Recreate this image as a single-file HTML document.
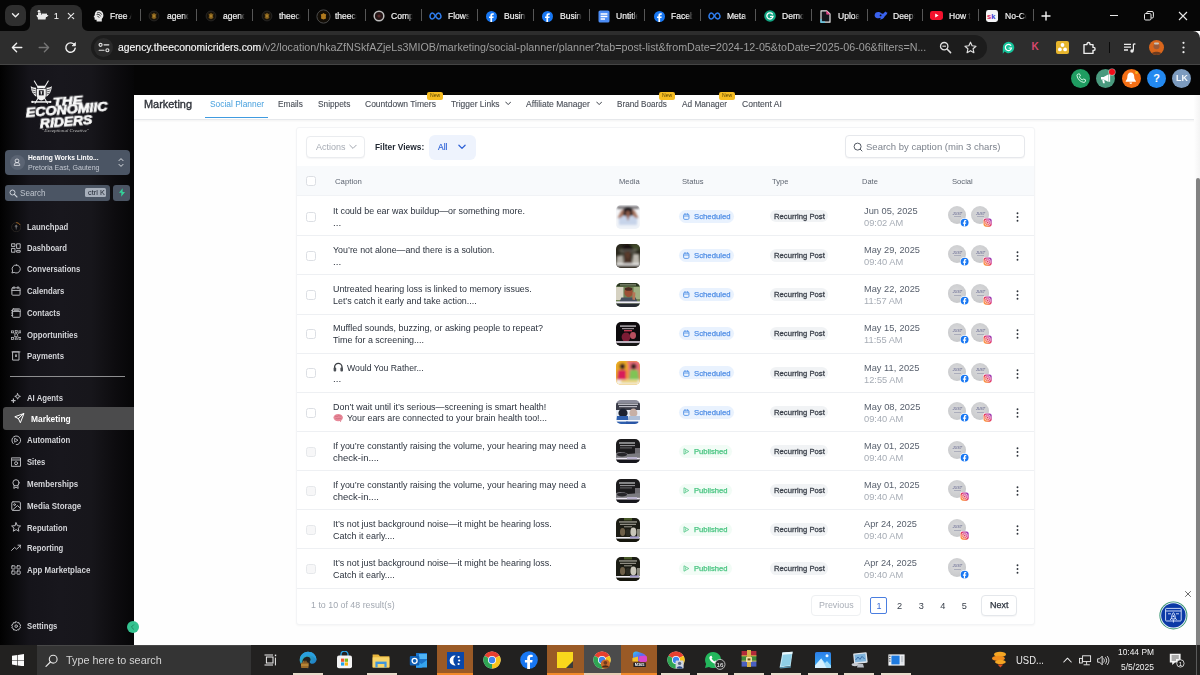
<!DOCTYPE html>
<html lang="en">
<head>
<meta charset="utf-8">
<title>Social Planner</title>
<style>
*{box-sizing:border-box;margin:0;padding:0}
html,body{width:1200px;height:675px;overflow:hidden;background:#fff;font-family:"Liberation Sans",sans-serif;}
.abs{position:absolute}
.t{white-space:nowrap}
#root{position:relative;width:1200px;height:675px;overflow:hidden;background:#fdfdfe}
/* chrome */
#tabbar{left:0;top:0;width:1200px;height:31px;background:#060606}
#toolbar{left:0;top:31px;width:1200px;height:33px;background:#2d2d2d;border-radius:0 7px 0 0}
#tbline{left:0;top:64px;width:1200px;height:1px;background:#454545}
.tab{top:7.6px;height:16px;color:#f4f4f4;font-size:9.4px;line-height:16px;white-space:nowrap;overflow:hidden;transform-origin:0 50%;transform:scaleX(.91);-webkit-mask-image:linear-gradient(90deg,#000 68%,transparent 92%);mask-image:linear-gradient(90deg,#000 68%,transparent 92%);-webkit-text-stroke:.2px #f4f4f4}
.tsep{top:9px;width:1px;height:11.6px;background:#565656}
#urlpill{left:91px;top:35px;width:896px;height:25px;border-radius:12.5px;background:#1c1c1c}
#url{left:117px;top:40px;font-size:10.5px;line-height:15px;color:#9d9d9d;white-space:nowrap}
#url b{font-weight:normal;color:#f6f6f6;-webkit-text-stroke:.15px #f6f6f6}
/* app */
#apphead{left:0;top:65px;width:1200px;height:30px;background:#050505}
#sidebar{left:0;top:65px;width:134px;height:580px;background:linear-gradient(90deg,#010101 0%,#060607 5%,#15141a 22%,#18171d 45%,#17161b 68%,#0d0c0f 86%,#060607 100%)}
#main{left:134px;top:95px;width:1066px;height:550px;background:#fefefe}
#navbar{left:134px;top:95px;width:1062px;height:25px;background:#fff;border-bottom:1px solid #e6e8eb;box-shadow:0 1px 2px rgba(0,0,0,.05)}
.newb{top:92px;height:7px;width:14px;background:#f7c325;border-radius:2px;color:#5c4500;font-size:5px;line-height:7px;text-align:center}
#card{left:296px;top:127px;width:739px;height:498px;background:#fff;border:1px solid #f3f4f6;border-radius:3px;box-shadow:0 1px 2px rgba(16,24,40,.035)}
#thead{left:297px;top:165.8px;width:737px;height:30.6px;background:#f8fafc;border-bottom:1px solid #f1f3f6}
.cb{width:10px;height:10px;border:1px solid #dcdfe4;border-radius:2.5px;background:#fff}
.rowline{left:297px;width:737px;height:1px;background:#eef0f3}
.thumb{left:616px;width:24px;height:24px;border-radius:4px;overflow:hidden}
.av{width:18px;height:18px;border-radius:50%;background:radial-gradient(circle at 45% 40%,#d9d9db 0%,#cdced0 55%,#bfc0c3 100%)}
/* taskbar */
#taskbar{left:0;top:645px;width:1200px;height:30px;background:#222120}
</style>
</head>
<body>
<div id="root">

<div id="tabbar" class="abs"></div>
<div id="toolbar" class="abs"></div>
<div id="tbline" class="abs"></div>
<div class="abs" style="left:5px;top:5px;width:21px;height:21px;border-radius:7px;background:#2f2f2f"></div>
<svg class="abs" style="left:11px;top:12px" width="9" height="7" viewBox="0 0 9 7"><path d="M1.5 1.8 L4.5 4.8 L7.5 1.8" fill="none" stroke="#f0f0f0" stroke-width="1.4" stroke-linecap="round" stroke-linejoin="round"/></svg>
<div class="abs" style="left:30px;top:5px;width:52px;height:27px;border-radius:8px 8px 0 0;background:#2d2d2d"></div>
<svg class="abs" style="left:24px;top:25px" width="6" height="6"><path d="M6 0 V6 H0 A6 6 0 0 0 6 0Z" fill="#2d2d2d"/></svg>
<svg class="abs" style="left:82px;top:25px" width="6" height="6"><path d="M0 0 V6 H6 A6 6 0 0 1 0 0Z" fill="#2d2d2d"/></svg>
<svg class="abs" style="left:36px;top:9px" width="13" height="12" viewBox="0 0 13 12"><g fill="#e9e9e9"><circle cx="3" cy="2.2" r="1.3"/><rect x="2" y="3.6" width="3" height="2.5"/><path d="M0.5 6 H12.5 L11 8 H10 L9.5 10.5 H2 L1.6 8 H1Z"/><rect x="5.5" y="4.6" width="5.5" height="1.6"/></g></svg>
<div class="abs tab" style="left:54px;width:8px;-webkit-mask-image:none;mask-image:none">1</div>
<svg class="abs" style="left:66.5px;top:12px" width="8" height="8" viewBox="0 0 8 8"><path d="M1.3 1.3 L6.7 6.7 M6.7 1.3 L1.3 6.7" stroke="#e6e6e6" stroke-width="1.2" stroke-linecap="round"/></svg>
<svg class="abs" style="left:92.7px;top:10px" width="11" height="12" viewBox="0 0 11 12"><path d="M5.6 0.6 C8.4 0.6 10.4 2.6 10.4 5.2 C10.4 7 9.5 8.2 8.8 9 V11.5 H3.6 V9.8 H2.4 C1.8 9.8 1.6 9.4 1.6 8.9 V7.6 L0.6 7.1 L1.7 5.2 C1.7 2.6 3.2 0.6 5.6 0.6Z" fill="#e8e8e8"/><path d="M4 3 C5.5 2 8 2.6 8.6 4.6 M3.6 4.6 C5 4 7.2 4.6 7.6 6.4 M4.4 6.3 C5.2 6.2 6 6.8 6.2 7.8" stroke="#111" stroke-width=".8" fill="none"/></svg>
<div class="abs tab" style="left:110.4px;width:26px">Free A</div>
<div class="abs tsep" style="left:139.7px"></div>
<svg class="abs" style="left:148.4px;top:9.5px" width="12" height="12" viewBox="0 0 12 12"><circle cx="6" cy="6" r="4.9" fill="#15110a" stroke="#2c2c2c" stroke-width=".8"/><path d="M6 2.8 L7.3 3.9 L8.5 3.6 L8 5.9 L8.4 7.9 L6 9.2 L3.6 7.9 L4 5.9 L3.5 3.6 L4.7 3.9Z" fill="#7d5a1c"/><path d="M6 4 L7 6 L6 8 L5 6Z" fill="#b58a2e"/></svg>
<div class="abs tab" style="left:166.6px;width:26px">agency</div>
<div class="abs tsep" style="left:195.9px"></div>
<svg class="abs" style="left:204.6px;top:9.5px" width="12" height="12" viewBox="0 0 12 12"><circle cx="6" cy="6" r="4.9" fill="#15110a" stroke="#2c2c2c" stroke-width=".8"/><path d="M6 2.8 L7.3 3.9 L8.5 3.6 L8 5.9 L8.4 7.9 L6 9.2 L3.6 7.9 L4 5.9 L3.5 3.6 L4.7 3.9Z" fill="#7d5a1c"/><path d="M6 4 L7 6 L6 8 L5 6Z" fill="#b58a2e"/></svg>
<div class="abs tab" style="left:222.8px;width:26px">agency</div>
<div class="abs tsep" style="left:252.1px"></div>
<svg class="abs" style="left:260.8px;top:9.5px" width="12" height="12" viewBox="0 0 12 12"><circle cx="6" cy="6" r="4.9" fill="#15110a" stroke="#2c2c2c" stroke-width=".8"/><path d="M6 2.8 L7.3 3.9 L8.5 3.6 L8 5.9 L8.4 7.9 L6 9.2 L3.6 7.9 L4 5.9 L3.5 3.6 L4.7 3.9Z" fill="#7d5a1c"/><path d="M6 4 L7 6 L6 8 L5 6Z" fill="#b58a2e"/></svg>
<div class="abs tab" style="left:279.0px;width:26px">theeconomic</div>
<div class="abs tsep" style="left:308.3px"></div>
<svg class="abs" style="left:315.5px;top:8.5px" width="15" height="15" viewBox="0 0 15 15"><circle cx="7.5" cy="7.5" r="6.6" fill="#120d06" stroke="#4a4a4a" stroke-width="1"/><path d="M7.5 4 L9.2 5.2 L10.2 5 L9.8 7.6 L10 9.4 L7.5 10.6 L5 9.4 L5.2 7.6 L4.8 5 L5.8 5.2Z" fill="#b07a1e"/></svg>
<div class="abs tab" style="left:335.2px;width:26px">theeconomic</div>
<div class="abs tsep" style="left:364.5px"></div>
<svg class="abs" style="left:373.2px;top:10px" width="12" height="12" viewBox="0 0 12 12"><circle cx="6" cy="6" r="4.8" fill="#241616" stroke="#bdbdbd" stroke-width="1.5"/><circle cx="6" cy="6" r="1.6" fill="#5a2a2a"/></svg>
<div class="abs tab" style="left:391.4px;width:26px">Company</div>
<div class="abs tsep" style="left:420.7px"></div>
<svg class="abs" style="left:428.9px;top:12px" width="13" height="8" viewBox="0 0 13 8"><path d="M1.2 5.6 C0.6 3.4 1.8 1 3.3 1 C4.9 1 5.9 3.2 6.5 4.2 C7.2 5.4 8.3 7 9.7 7 C11.3 7 12.3 5.4 11.8 3.4 C11.4 1.8 10.4 1 9.5 1 C8.2 1 7.2 2.6 6.5 3.8 C5.7 5.2 4.6 7 3.2 7 C2.1 7 1.5 6.4 1.2 5.6Z" fill="none" stroke="#2f7ef0" stroke-width="1.5"/></svg>
<div class="abs tab" style="left:447.6px;width:26px">Flows</div>
<div class="abs tsep" style="left:476.9px"></div>
<svg class="abs" style="left:486.1px;top:10.5px" width="11" height="11" viewBox="0 0 11 11"><circle cx="5.5" cy="5.5" r="5.5" fill="#1877f2"/><path d="M6.1 11 V7.1 H7.5 L7.75 5.5 H6.1 V4.5 C6.1 3.95 6.35 3.7 6.95 3.7 H7.8 V2.3 C7.5 2.25 7 2.2 6.5 2.2 C5.2 2.2 4.4 3 4.4 4.3 V5.5 H3 V7.1 H4.4 V11Z" fill="#fff"/></svg>
<div class="abs tab" style="left:503.8px;width:26px">Business</div>
<div class="abs tsep" style="left:533.1px"></div>
<svg class="abs" style="left:542.3px;top:10.5px" width="11" height="11" viewBox="0 0 11 11"><circle cx="5.5" cy="5.5" r="5.5" fill="#1877f2"/><path d="M6.1 11 V7.1 H7.5 L7.75 5.5 H6.1 V4.5 C6.1 3.95 6.35 3.7 6.95 3.7 H7.8 V2.3 C7.5 2.25 7 2.2 6.5 2.2 C5.2 2.2 4.4 3 4.4 4.3 V5.5 H3 V7.1 H4.4 V11Z" fill="#fff"/></svg>
<div class="abs tab" style="left:560.0px;width:26px">Business</div>
<div class="abs tsep" style="left:588.8px"></div>
<svg class="abs" style="left:597.5px;top:9.5px" width="12" height="13" viewBox="0 0 12 13"><rect x="0.5" y="0.5" width="11" height="12" rx="1.6" fill="#4c8df6"/><path d="M2.6 4 H9.4 M2.6 6.5 H9.4 M2.6 9 H7" stroke="#fff" stroke-width="1.3"/></svg>
<div class="abs tab" style="left:615.6px;width:26px">Untitled</div>
<div class="abs tsep" style="left:644.3px"></div>
<svg class="abs" style="left:653.5px;top:10.5px" width="11" height="11" viewBox="0 0 11 11"><circle cx="5.5" cy="5.5" r="5.5" fill="#1877f2"/><path d="M6.1 11 V7.1 H7.5 L7.75 5.5 H6.1 V4.5 C6.1 3.95 6.35 3.7 6.95 3.7 H7.8 V2.3 C7.5 2.25 7 2.2 6.5 2.2 C5.2 2.2 4.4 3 4.4 4.3 V5.5 H3 V7.1 H4.4 V11Z" fill="#fff"/></svg>
<div class="abs tab" style="left:671.2px;width:26px">Facebook</div>
<div class="abs tsep" style="left:699.9px"></div>
<svg class="abs" style="left:708.1px;top:12px" width="13" height="8" viewBox="0 0 13 8"><path d="M1.2 5.6 C0.6 3.4 1.8 1 3.3 1 C4.9 1 5.9 3.2 6.5 4.2 C7.2 5.4 8.3 7 9.7 7 C11.3 7 12.3 5.4 11.8 3.4 C11.4 1.8 10.4 1 9.5 1 C8.2 1 7.2 2.6 6.5 3.8 C5.7 5.2 4.6 7 3.2 7 C2.1 7 1.5 6.4 1.2 5.6Z" fill="none" stroke="#2f7ef0" stroke-width="1.5"/></svg>
<div class="abs tab" style="left:726.8px;width:26px">Meta B</div>
<div class="abs tsep" style="left:755.4px"></div>
<svg class="abs" style="left:764.1px;top:10px" width="12" height="12" viewBox="0 0 12 12"><circle cx="6" cy="6" r="5.8" fill="#11a683"/><path d="M8.4 4 A3.1 3.1 0 1 0 9 6.4 H6.6" fill="none" stroke="#fff" stroke-width="1.3" stroke-linecap="round"/></svg>
<div class="abs tab" style="left:782.3px;width:26px">Demo</div>
<div class="abs tsep" style="left:811.0px"></div>
<svg class="abs" style="left:820.2px;top:9.5px" width="11" height="13" viewBox="0 0 11 13"><path d="M1 0.8 H6.8 L10 4 V12.2 H1Z" fill="#16161c" stroke="#e6e6e6" stroke-width="1.2" stroke-linejoin="round"/><path d="M6.6 0.8 V4.2 H10" fill="#e64a8a" stroke="#e64a8a" stroke-width=".6"/><path d="M1 9 V12.2 H5" stroke="#54c7e8" stroke-width="1.2" fill="none"/></svg>
<div class="abs tab" style="left:837.9px;width:26px">Upload</div>
<div class="abs tsep" style="left:866.5px"></div>
<svg class="abs" style="left:874.2px;top:11px" width="14" height="10" viewBox="0 0 14 10"><path d="M0.6 4.4 C0.6 1.8 2.6 0.8 4.6 1 C6.6 1.2 7.6 2.6 8.6 2.8 C9.8 3 10.6 1.2 11.4 0.6 C11.8 1.4 12.8 1.6 13.4 1.4 C13.2 3.4 11.8 4.2 10.8 5.2 C9.8 7.6 7.6 8.6 5.6 8.4 C6.4 8 6.8 7.4 6.8 6.8 C5.4 7.6 0.6 7.6 0.6 4.4Z" fill="#3a62ee"/><circle cx="6.6" cy="4.4" r="0.9" fill="#0b0b0b"/></svg>
<div class="abs tab" style="left:893.4px;width:26px">DeepSeek</div>
<div class="abs tsep" style="left:922.0px"></div>
<svg class="abs" style="left:930.2px;top:11px" width="13" height="9" viewBox="0 0 13 9"><rect width="13" height="9" rx="2.4" fill="#f4112d"/><path d="M5.2 2.4 L8.6 4.5 L5.2 6.6Z" fill="#fff"/></svg>
<div class="abs tab" style="left:948.9px;width:26px">How t</div>
<div class="abs tsep" style="left:977.6px"></div>
<svg class="abs" style="left:986.3px;top:9.5px" width="12" height="12" viewBox="0 0 12 12"><rect width="12" height="12" rx="2.4" fill="#f4f4f6"/><text x="1" y="9" font-family="Liberation Sans,sans-serif" font-weight="bold" font-size="7.5" fill="#e0245e" letter-spacing="-.4">s</text><text x="5.2" y="9" font-family="Liberation Sans,sans-serif" font-weight="bold" font-size="7.5" fill="#3a3ad0">k</text></svg>
<div class="abs tab" style="left:1004.5px;width:26px">No-Code</div>
<div class="abs tsep" style="left:1033.2px"></div>
<svg class="abs" style="left:1041px;top:10.5px" width="10" height="10" viewBox="0 0 10 10"><path d="M5 1 V9 M1 5 H9" stroke="#f2f2f2" stroke-width="1.4" stroke-linecap="round"/></svg>
<div class="abs" style="left:1110px;top:15px;width:8px;height:1px;background:#e8e8e8"></div>
<svg class="abs" style="left:1143.5px;top:10.5px" width="10" height="10" viewBox="0 0 10 10"><rect x="0.5" y="2.5" width="6.5" height="6.5" rx="1.2" fill="none" stroke="#e8e8e8" stroke-width="1"/><path d="M2.8 2.4 V1.7 A1.2 1.2 0 0 1 4 0.5 H8 A1.4 1.4 0 0 1 9.4 1.9 V5.8 A1.2 1.2 0 0 1 8.2 7 H7.2" fill="none" stroke="#e8e8e8" stroke-width="1"/></svg>
<svg class="abs" style="left:1178px;top:10.5px" width="10" height="10" viewBox="0 0 10 10"><path d="M1 1 L9 9 M9 1 L1 9" stroke="#e8e8e8" stroke-width="1.1"/></svg>
<svg class="abs" style="left:11px;top:42px" width="12" height="11" viewBox="0 0 12 11"><path d="M10.8 5.5 H1.6 M5.6 1.3 L1.4 5.5 L5.6 9.7" fill="none" stroke="#efefef" stroke-width="1.35" stroke-linecap="round" stroke-linejoin="round"/></svg>
<svg class="abs" style="left:38px;top:42px" width="12" height="11" viewBox="0 0 12 11"><path d="M1.2 5.5 H10.4 M6.4 1.3 L10.6 5.5 L6.4 9.7" fill="none" stroke="#757575" stroke-width="1.35" stroke-linecap="round" stroke-linejoin="round"/></svg>
<svg class="abs" style="left:64px;top:41px" width="13" height="13" viewBox="0 0 13 13"><path d="M10.6 4.2 A4.7 4.7 0 1 0 11.2 7.2" fill="none" stroke="#efefef" stroke-width="1.4" stroke-linecap="round"/><path d="M11.4 1.6 V4.8 H8.2Z" fill="#efefef" stroke="#efefef" stroke-width=".8" stroke-linejoin="round"/></svg>
<div id="urlpill" class="abs"></div>
<div class="abs" style="left:94px;top:38px;width:19px;height:19px;border-radius:50%;background:#2a2a2a"></div>
<svg class="abs" style="left:97.5px;top:42px" width="12" height="11" viewBox="0 0 12 11"><g fill="none" stroke="#e4e4e4" stroke-width="1.15" stroke-linecap="round"><circle cx="2.6" cy="2.8" r="1.5"/><path d="M6 2.8 H10.8"/><circle cx="9.4" cy="8.2" r="1.5"/><path d="M1.2 8.2 H6"/></g></svg>
<div class="abs t" style="left:117.5px;top:40.30px;font-size:10.6px;line-height:15px;color:#f6f6f6;transform-origin:0 50%;transform: scaleX(0.9826);-webkit-text-stroke:.15px #f6f6f6;">agency.theeconomicriders.com</div>
<div class="abs t" style="left:262px;top:40.30px;font-size:10.6px;line-height:15px;color:#9e9e9e;transform-origin:0 50%;transform: scaleX(1.0118);">/v2/location/hkaZfNSkfAZjeLs3MIOB/marketing/social-planner/planner?tab=post-list&amp;fromDate=2024-12-05&amp;toDate=2025-06-06&amp;filters=N...</div>
<svg class="abs" style="left:939px;top:41px" width="13" height="13" viewBox="0 0 13 13"><circle cx="5.2" cy="5.2" r="3.7" fill="none" stroke="#e0e0e0" stroke-width="1.3"/><path d="M8 8 L11.6 11.6" stroke="#e0e0e0" stroke-width="1.5" stroke-linecap="round"/><path d="M3.4 5.2 H7" stroke="#e0e0e0" stroke-width="1.1"/></svg>
<svg class="abs" style="left:963.5px;top:40.5px" width="13" height="13" viewBox="0 0 13 13"><path d="M6.5 1.2 L8.1 4.8 L12 5.2 L9.1 7.8 L9.9 11.7 L6.5 9.7 L3.1 11.7 L3.9 7.8 L1 5.2 L4.9 4.8Z" fill="none" stroke="#e0e0e0" stroke-width="1.15" stroke-linejoin="round"/></svg>
<svg class="abs" style="left:1001.5px;top:40.5px" width="13" height="14" viewBox="0 0 13 14"><path d="M6.5 0.8 A5.7 5.7 0 1 1 2.6 10.6 L0.8 12.8 V6.5 A5.7 5.7 0 0 1 6.5 0.8Z" fill="#15c39a"/><path d="M8.8 4.4 A3.1 3.1 0 1 0 9.5 7 H7" fill="none" stroke="#fff" stroke-width="1.2" stroke-linecap="round"/></svg>
<div class="abs" style="left:1030px;top:40px;width:10px;height:14px;font-size:10px;line-height:14px;font-weight:bold;color:#d8476d;text-align:center">K</div>
<svg class="abs" style="left:1055.5px;top:41px" width="13" height="13" viewBox="0 0 13 13"><rect width="13" height="13" rx="2" fill="#e7b52c"/><circle cx="6.5" cy="4" r="1.9" fill="#fff"/><circle cx="3.9" cy="8.4" r="1.9" fill="#fff"/><circle cx="9.1" cy="8.4" r="1.9" fill="#fff"/></svg>
<svg class="abs" style="left:1082px;top:40.5px" width="14" height="14" viewBox="0 0 14 14"><path d="M2 3.6 H5 V3 A1.5 1.5 0 0 1 8 3 V3.6 H11 V6.4 H11.6 A1.5 1.5 0 0 1 11.6 9.4 H11 V12.4 H2Z" fill="none" stroke="#ededed" stroke-width="1.4" stroke-linejoin="round"/></svg>
<div class="abs" style="left:1109px;top:42px;width:1px;height:11px;background:#0a0a0a"></div>
<svg class="abs" style="left:1123px;top:41.5px" width="13" height="12" viewBox="0 0 13 12"><path d="M1 2.4 H8 M1 5.2 H8 M1 8 H5" stroke="#ededed" stroke-width="1.3"/><path d="M10.4 2 V8.6" stroke="#ededed" stroke-width="1.2"/><path d="M10.4 2 H12.4" stroke="#ededed" stroke-width="1.4"/><circle cx="9" cy="9" r="1.7" fill="#ededed"/></svg>
<svg class="abs" style="left:1148.5px;top:40px" width="15" height="15" viewBox="0 0 15 15"><defs><clipPath id="avc"><circle cx="7.5" cy="7.5" r="7.5"/></clipPath></defs><g clip-path="url(#avc)"><rect width="15" height="15" fill="#d9661c"/><circle cx="7.5" cy="6.2" r="3" fill="#9a5a3a"/><path d="M2 15 C2 10.5 13 10.5 13 15Z" fill="#6d3b1f"/><rect x="5" y="2.4" width="5" height="2" rx="1" fill="#c9c2b8"/></g></svg>
<svg class="abs" style="left:1181.5px;top:41px" width="3" height="13" viewBox="0 0 3 13"><circle cx="1.5" cy="1.8" r="1.1" fill="#ededed"/><circle cx="1.5" cy="6.5" r="1.1" fill="#ededed"/><circle cx="1.5" cy="11.2" r="1.1" fill="#ededed"/></svg>
<div id="apphead" class="abs"></div>
<div id="sidebar" class="abs"></div>
<svg class="abs" style="left:30.4px;top:80.2px" width="22.6" height="25.6" viewBox="0 0 24 27"><g stroke="#f2f2f2" stroke-width="1.1" stroke-linecap="round"><path d="M4.6 1 L18.6 24.6"/><path d="M19.4 1 L5.4 24.6"/></g><g fill="#f2f2f2"><path d="M7.8 6 H16.2 V8.4 H7.8Z"/><path d="M7.2 9 H16.8 V16.6 C16.8 19.4 14.4 21 12 21.8 C9.6 21 7.2 19.4 7.2 16.6Z"/><path d="M6.4 8 C4 8.2 2 7.2 0.8 6.2 C1 9.4 1.8 12.4 3.4 14.6 C4.4 16 5.6 17 6.6 17.6Z"/><path d="M17.6 8 C20 8.2 22 7.2 23.2 6.2 C23 9.4 22.2 12.4 20.6 14.6 C19.6 16 18.4 17 17.4 17.6Z"/><path d="M2.2 22.4 H21.8 V24 H2.2Z"/><circle cx="2.4" cy="23.2" r="1.2"/><circle cx="21.6" cy="23.2" r="1.2"/></g><g stroke="#18171c" stroke-width=".7" fill="none"><path d="M1.6 9.2 L6.2 10.4 M2.4 11.6 L6.2 12.6 M3.4 13.8 L6.4 14.8"/><path d="M22.4 9.2 L17.8 10.4 M21.6 11.6 L17.8 12.6 M20.6 13.8 L17.6 14.8"/><path d="M7.2 9 H16.8" stroke-width=".6"/></g><rect x="9.4" y="10.8" width="5.2" height="5.4" fill="#18171c"/><path d="M11 11.8 H13 V13 H12.6 V15.2 H11.4 V13 H11Z" fill="#f2f2f2"/></svg>
<div class="abs t" style="left:52.6px;top:95.70px;font-size:11.8px;line-height:13px;color:#fafafa;font-weight:bold;font-style:italic;transform-origin:0 50%;transform:rotate(-4.5deg) scaleX(1.2495);-webkit-text-stroke:.75px #fafafa;will-change:transform;">THE</div>
<div class="abs t" style="left:26.4px;top:106.40px;font-size:12.6px;line-height:15px;color:#fafafa;font-weight:bold;font-style:italic;transform-origin:0 50%;transform:rotate(-4.5deg) scaleX(1.1242);-webkit-text-stroke:.75px #fafafa;will-change:transform;">ECONOMIIC</div>
<div class="abs t" style="left:39.8px;top:116.60px;font-size:12.4px;line-height:14px;color:#fafafa;font-weight:bold;font-style:italic;transform-origin:0 50%;transform:rotate(-4.5deg) scaleX(1.1190);-webkit-text-stroke:.75px #fafafa;will-change:transform;">RIDERS</div>
<div class="abs t" style="left:42px;top:127.60px;font-size:4.6px;line-height:6px;color:#bdbdbd;font-style:italic;font-family:&quot;Liberation Serif&quot;,serif;transform-origin:0 50%;transform: scaleX(1.1034);">&quot;Exceptional Creative&quot;</div>
<div class="abs" style="left:5px;top:150px;width:125px;height:25px;border-radius:4px;background:#4b5564"></div>
<div class="abs" style="left:9.8px;top:154.6px;width:15.2px;height:15.2px;border-radius:50%;background:#5b6473"></div>
<svg class="abs" style="left:13.4px;top:158.2px" width="8" height="8" viewBox="0 0 8 8"><g fill="none" stroke="#e8eaee" stroke-width=".8"><circle cx="4" cy="2.9" r="1.9"/><path d="M1.2 7.4 C1.2 5.2 2.4 4.6 4 4.6 C5.6 4.6 6.8 5.2 6.8 7.4 Z" stroke-linejoin="round"/></g></svg>
<div class="abs t" style="left:28px;top:152.60px;font-size:7.8px;line-height:10px;color:#ffffff;font-weight:bold;transform-origin:0 50%;transform: scaleX(0.8534);">Hearing Works Linto...</div>
<div class="abs t" style="left:28px;top:162.80px;font-size:7.8px;line-height:10px;color:#c3c8d1;transform-origin:0 50%;transform: scaleX(0.9013);">Pretoria East, Gauteng</div>
<svg class="abs" style="left:118.3px;top:156.6px" width="6" height="11" viewBox="0 0 6 11"><path d="M1 3.6 L3 1.6 L5 3.6 M1 7.4 L3 9.4 L5 7.4" fill="none" stroke="#e3e6ea" stroke-width=".95" stroke-linecap="round" stroke-linejoin="round"/></svg>
<div class="abs" style="left:5px;top:184.6px;width:104.6px;height:16.2px;border-radius:3px;background:#4b5564"></div>
<svg class="abs" style="left:8.8px;top:188.6px" width="9" height="9" viewBox="0 0 9 9"><circle cx="3.5" cy="3.5" r="2.5" fill="none" stroke="#cdd2d9" stroke-width="1"/><path d="M5.4 5.4 L8 8" stroke="#cdd2d9" stroke-width="1.1" stroke-linecap="round"/></svg>
<div class="abs t" style="left:20px;top:186.80px;font-size:9.3px;line-height:12px;color:#bfc5ce;transform-origin:0 50%;transform: scaleX(0.8687);">Search</div>
<div class="abs" style="left:85px;top:188px;width:21.4px;height:9.4px;border-radius:1.5px;background:#a7afbb"></div>
<div class="abs t" style="left:87.6px;top:188.20px;font-size:7.3px;line-height:9px;color:#1d2430;transform-origin:0 50%;transform: scaleX(1.0105);">ctrl K</div>
<div class="abs" style="left:112.6px;top:184.6px;width:17.4px;height:16.2px;border-radius:3px;background:#4b5564"></div>
<svg class="abs" style="left:117.6px;top:188.4px" width="8" height="9" viewBox="0 0 8 9"><path d="M4.6 0.2 L1 4.8 H3.4 L3.2 8.8 L7 3.9 H4.6Z" fill="#34d399"/></svg>
<svg class="abs" style="left:10.7px;top:221.5px" width="10.4" height="10.4" viewBox="0 0 10.4 10.4"><circle cx="5.2" cy="5.2" r="4.6" fill="none" stroke="#2e2926" stroke-width=".8"/><path d="M5.2 0.6 A4.6 4.6 0 0 1 9.2 3" fill="none" stroke="#a8681f" stroke-width=".9"/><path d="M5.2 2.6 L7 4.6 H6 V5.6 H4.4 V4.6 H3.4Z M4.8 5.6 V7.4 H5.6 V5.6" fill="#b9babe" opacity=".55"/></svg>
<div class="abs t" style="left:26.7px;top:221.70px;font-size:8.6px;line-height:11px;color:#d3d4d8;font-weight:bold;transform-origin:0 50%;transform: scaleX(0.9009);">Launchpad</div>
<svg class="abs" style="left:10.7px;top:242.8px" width="10.4" height="10.4" viewBox="0 0 10.4 10.4"><g fill="none" stroke="#b9babe" stroke-width="1" stroke-linecap="round" stroke-linejoin="round"><rect x="0.8" y="0.8" width="3.2" height="2.6"/><rect x="6" y="0.8" width="3.2" height="4.6"/><rect x="0.8" y="5.4" width="3.2" height="3.8"/><rect x="6" y="7.4" width="3.2" height="1.8"/></g></svg>
<div class="abs t" style="left:26.7px;top:243.00px;font-size:8.6px;line-height:11px;color:#d3d4d8;font-weight:bold;transform-origin:0 50%;transform: scaleX(0.8911);">Dashboard</div>
<svg class="abs" style="left:10.7px;top:264.2px" width="10.4" height="10.4" viewBox="0 0 10.4 10.4"><g fill="none" stroke="#b9babe" stroke-width="1" stroke-linecap="round" stroke-linejoin="round"><path d="M5.4 1 A4 4 0 1 1 3.2 8.4 L0.9 9 L1.6 6.9 A4 4 0 0 1 5.4 1Z"/></g></svg>
<div class="abs t" style="left:26.7px;top:264.40px;font-size:8.6px;line-height:11px;color:#d3d4d8;font-weight:bold;transform-origin:0 50%;transform: scaleX(0.8928);">Conversations</div>
<svg class="abs" style="left:10.7px;top:285.8px" width="10.4" height="10.4" viewBox="0 0 10.4 10.4"><g fill="none" stroke="#b9babe" stroke-width="1" stroke-linecap="round" stroke-linejoin="round"><rect x="0.9" y="1.8" width="8.2" height="7.4" rx=".8"/><path d="M0.9 4.4 H9.1 M3 0.6 V2.6 M7 0.6 V2.6"/></g></svg>
<div class="abs t" style="left:26.7px;top:286.00px;font-size:8.6px;line-height:11px;color:#d3d4d8;font-weight:bold;transform-origin:0 50%;transform: scaleX(0.8974);">Calendars</div>
<svg class="abs" style="left:10.7px;top:307.8px" width="10.4" height="10.4" viewBox="0 0 10.4 10.4"><g fill="none" stroke="#b9babe" stroke-width="1" stroke-linecap="round" stroke-linejoin="round"><rect x="1.4" y="0.9" width="7.8" height="8.4" rx=".9"/><path d="M1.4 3.4 H9.2 M0.6 2.6 H1.8 M0.6 5 H1.8 M0.6 7.4 H1.8"/><path d="M3.4 2.2 H7.4" stroke-width="1.2"/></g></svg>
<div class="abs t" style="left:26.7px;top:308.00px;font-size:8.6px;line-height:11px;color:#d3d4d8;font-weight:bold;transform-origin:0 50%;transform: scaleX(0.9054);">Contacts</div>
<svg class="abs" style="left:10.7px;top:329.5px" width="10.4" height="10.4" viewBox="0 0 10.4 10.4"><g fill="none" stroke="#b9babe" stroke-width=".8"><rect x="0.5" y="0.9" width="1.9" height="1.9"/><rect x="8" y="0.9" width="1.9" height="1.9"/><rect x="0.5" y="7.6" width="1.9" height="1.9"/><rect x="8" y="7.6" width="1.9" height="1.9"/><rect x="4.2" y="0.3" width="2" height="2"/><rect x="4.2" y="8" width="2" height="2"/><circle cx="5.2" cy="5.2" r="1.5"/><path d="M2.4 2.8 L4 4.2 M8 2.8 L6.4 4.2 M2.4 7.6 L4 6.2 M8 7.6 L6.4 6.2 M5.2 2.3 V3.7 M5.2 6.7 V8"/></g></svg>
<div class="abs t" style="left:26.7px;top:329.70px;font-size:8.6px;line-height:11px;color:#d3d4d8;font-weight:bold;transform-origin:0 50%;transform: scaleX(0.8998);">Opportunities</div>
<svg class="abs" style="left:10.7px;top:351.2px" width="10.4" height="10.4" viewBox="0 0 10.4 10.4"><g fill="none" stroke="#b9babe" stroke-width="1" stroke-linecap="round" stroke-linejoin="round"><path d="M1 0.9 H9"/><rect x="2" y="0.9" width="6" height="8.2"/></g><rect x="4.2" y="3.4" width="1.6" height="2.6" fill="#b9babe"/></svg>
<div class="abs t" style="left:26.7px;top:351.40px;font-size:8.6px;line-height:11px;color:#d3d4d8;font-weight:bold;transform-origin:0 50%;transform: scaleX(0.9111);">Payments</div>
<svg class="abs" style="left:10.7px;top:392.8px" width="10.4" height="10.4" viewBox="0 0 10.4 10.4"><g fill="none" stroke="#b9babe" stroke-width="1" stroke-linecap="round" stroke-linejoin="round"><path d="M6.6 0.6 L7.4 2.6 L9.4 3.4 L7.4 4.2 L6.6 6.2 L5.8 4.2 L3.8 3.4 L5.8 2.6Z"/><path d="M2.4 5.8 V9.4 M0.6 7.6 H4.2" stroke-width="1.2"/></g></svg>
<div class="abs t" style="left:26.7px;top:393.00px;font-size:8.6px;line-height:11px;color:#d3d4d8;font-weight:bold;transform-origin:0 50%;transform: scaleX(0.9046);">AI Agents</div>
<svg class="abs" style="left:10.7px;top:434.8px" width="10.4" height="10.4" viewBox="0 0 10.4 10.4"><g fill="none" stroke="#b9babe" stroke-width="1" stroke-linecap="round" stroke-linejoin="round"><path d="M2.2 8.6 A4.4 4.4 0 1 1 5.2 9.8" /><path d="M4 3.4 L7 5.2 L4 7Z" stroke-width=".9"/></g></svg>
<div class="abs t" style="left:26.7px;top:435.00px;font-size:8.6px;line-height:11px;color:#d3d4d8;font-weight:bold;transform-origin:0 50%;transform: scaleX(0.9068);">Automation</div>
<svg class="abs" style="left:10.7px;top:456.8px" width="10.4" height="10.4" viewBox="0 0 10.4 10.4"><g fill="none" stroke="#b9babe" stroke-width="1" stroke-linecap="round" stroke-linejoin="round"><rect x="0.7" y="0.9" width="8.8" height="8.4"/><path d="M0.7 3 H9.5"/><circle cx="5.1" cy="6.2" r="1.5"/></g></svg>
<div class="abs t" style="left:26.7px;top:457.00px;font-size:8.6px;line-height:11px;color:#d3d4d8;font-weight:bold;transform-origin:0 50%;transform: scaleX(0.8906);">Sites</div>
<svg class="abs" style="left:10.7px;top:478.5px" width="10.4" height="10.4" viewBox="0 0 10.4 10.4"><g fill="none" stroke="#b9babe" stroke-width="1" stroke-linecap="round" stroke-linejoin="round"><circle cx="5" cy="3.8" r="3.1"/><path d="M3.2 6.4 L2.8 9.4 L5 8.2 L7.2 9.4 L6.8 6.4"/></g></svg>
<div class="abs t" style="left:26.7px;top:478.70px;font-size:8.6px;line-height:11px;color:#d3d4d8;font-weight:bold;transform-origin:0 50%;transform: scaleX(0.9259);">Memberships</div>
<svg class="abs" style="left:10.7px;top:500.5px" width="10.4" height="10.4" viewBox="0 0 10.4 10.4"><g fill="none" stroke="#b9babe" stroke-width="1" stroke-linecap="round" stroke-linejoin="round"><rect x="0.8" y="0.8" width="8.6" height="8.6" rx="1.2"/><circle cx="3.6" cy="3.6" r=".9"/><path d="M1.6 9 L6.4 4.6 L9.4 7.2"/></g></svg>
<div class="abs t" style="left:26.7px;top:500.70px;font-size:8.6px;line-height:11px;color:#d3d4d8;font-weight:bold;transform-origin:0 50%;transform: scaleX(0.9243);">Media Storage</div>
<svg class="abs" style="left:10.7px;top:522.4px" width="10.4" height="10.4" viewBox="0 0 10.4 10.4"><g fill="none" stroke="#b9babe" stroke-width="1" stroke-linecap="round" stroke-linejoin="round"><path d="M5.1 0.8 L6.4 3.7 L9.6 4 L7.2 6.1 L7.9 9.2 L5.1 7.6 L2.3 9.2 L3 6.1 L0.6 4 L3.8 3.7Z"/></g></svg>
<div class="abs t" style="left:26.7px;top:522.60px;font-size:8.6px;line-height:11px;color:#d3d4d8;font-weight:bold;transform-origin:0 50%;transform: scaleX(0.9003);">Reputation</div>
<svg class="abs" style="left:10.7px;top:543.2px" width="10.4" height="10.4" viewBox="0 0 10.4 10.4"><g fill="none" stroke="#b9babe" stroke-width="1" stroke-linecap="round" stroke-linejoin="round"><path d="M0.6 7.4 L3.6 4.4 L5.6 6.2 L9.6 2.4 M7 2.2 H9.8 V5"/></g></svg>
<div class="abs t" style="left:26.7px;top:543.40px;font-size:8.6px;line-height:11px;color:#d3d4d8;font-weight:bold;transform-origin:0 50%;transform: scaleX(0.8946);">Reporting</div>
<svg class="abs" style="left:10.7px;top:564.8px" width="10.4" height="10.4" viewBox="0 0 10.4 10.4"><g fill="none" stroke="#b9babe" stroke-width="1" stroke-linecap="round" stroke-linejoin="round"><rect x="0.8" y="0.8" width="3.2" height="3.2" rx=".4"/><rect x="6" y="0.8" width="3.2" height="3.2" rx=".4"/><rect x="0.8" y="6" width="3.2" height="3.2" rx=".4"/><rect x="6" y="6" width="3.2" height="3.2" rx=".4"/></g></svg>
<div class="abs t" style="left:26.7px;top:565.00px;font-size:8.6px;line-height:11px;color:#d3d4d8;font-weight:bold;transform-origin:0 50%;transform: scaleX(0.9203);">App Marketplace</div>
<svg class="abs" style="left:10.7px;top:620.5px" width="10.4" height="10.4" viewBox="0 0 10.4 10.4"><g fill="none" stroke="#b9babe" stroke-width="1" stroke-linecap="round" stroke-linejoin="round"><path d="M5.2 0.6 L6.4 1.8 L8 1.6 L8.4 3.2 L9.8 4 L9 5.4 L9.6 6.8 L8.2 7.4 L7.8 9 L6.2 8.8 L5.2 9.9 L4.2 8.8 L2.6 9 L2.2 7.4 L0.8 6.8 L1.4 5.4 L0.6 4 L2 3.2 L2.4 1.6 L4 1.8Z"/><circle cx="5.2" cy="5.2" r="1.3"/></g></svg>
<div class="abs t" style="left:26.7px;top:620.70px;font-size:8.6px;line-height:11px;color:#d3d4d8;font-weight:bold;transform-origin:0 50%;transform: scaleX(0.8966);">Settings</div>
<div class="abs" style="left:9.6px;top:376.4px;width:115px;height:1px;background:#8e8e90"></div>
<div class="abs" style="left:3px;top:407.4px;width:131px;height:23px;border-radius:3px 0 0 3px;background:#4b4b4c"></div>
<svg class="abs" style="left:14.2px;top:413.4px" width="10.4" height="10.4" viewBox="0 0 10.4 10.4"><g fill="none" stroke="#ffffff" stroke-width="1" stroke-linecap="round" stroke-linejoin="round"><path d="M9.6 0.6 L0.8 3.8 L4.4 5.6 L6.2 9.4Z M9.6 0.6 L4.4 5.6"/></g></svg>
<div class="abs t" style="left:31px;top:412.50px;font-size:9.2px;line-height:12px;color:#ffffff;font-weight:bold;transform-origin:0 50%;transform: scaleX(0.9146);">Marketing</div>
<div id="main" class="abs"></div>
<div id="navbar" class="abs"></div>
<div class="abs t" style="left:144.1px;top:97.00px;font-size:11.3px;line-height:14px;color:#30343b;transform-origin:0 50%;transform: scaleX(0.9676);-webkit-text-stroke:.38px #30343b;">Marketing</div>
<div class="abs t" style="left:209.5px;top:98.80px;font-size:8.8px;line-height:11px;color:#47a0de;transform-origin:0 50%;transform: scaleX(0.9536);">Social Planner</div>
<div class="abs" style="left:204.7px;top:116.8px;width:63.4px;height:1.2px;background:#3f9be0"></div>
<div class="abs t" style="left:278.3px;top:98.80px;font-size:8.8px;line-height:11px;color:#4a4f58;transform-origin:0 50%;transform: scaleX(0.9392);-webkit-text-stroke:.12px #4a4f58;">Emails</div>
<div class="abs t" style="left:317.7px;top:98.80px;font-size:8.8px;line-height:11px;color:#4a4f58;transform-origin:0 50%;transform: scaleX(0.9435);-webkit-text-stroke:.12px #4a4f58;">Snippets</div>
<div class="abs t" style="left:364.7px;top:98.80px;font-size:8.8px;line-height:11px;color:#4a4f58;transform-origin:0 50%;transform: scaleX(0.9667);-webkit-text-stroke:.12px #4a4f58;">Countdown Timers</div>
<div class="abs t" style="left:450.5px;top:98.80px;font-size:8.8px;line-height:11px;color:#4a4f58;transform-origin:0 50%;transform: scaleX(0.9618);-webkit-text-stroke:.12px #4a4f58;">Trigger Links</div>
<div class="abs t" style="left:526.1px;top:98.80px;font-size:8.8px;line-height:11px;color:#4a4f58;transform-origin:0 50%;transform: scaleX(0.9702);-webkit-text-stroke:.12px #4a4f58;">Affiliate Manager</div>
<div class="abs t" style="left:617.3px;top:98.80px;font-size:8.8px;line-height:11px;color:#4a4f58;transform-origin:0 50%;transform: scaleX(0.9257);-webkit-text-stroke:.12px #4a4f58;">Brand Boards</div>
<div class="abs t" style="left:682.4px;top:98.80px;font-size:8.8px;line-height:11px;color:#4a4f58;transform-origin:0 50%;transform: scaleX(0.9387);-webkit-text-stroke:.12px #4a4f58;">Ad Manager</div>
<div class="abs t" style="left:742.1px;top:98.80px;font-size:8.8px;line-height:11px;color:#4a4f58;transform-origin:0 50%;transform: scaleX(0.9710);-webkit-text-stroke:.12px #4a4f58;">Content AI</div>
<svg class="abs" style="left:505.1px;top:101.2px" width="6.4" height="5" viewBox="0 0 6.4 5"><path d="M0.7 1 L3.2 3.6 L5.7 1" fill="none" stroke="#3f444c" stroke-width="1" stroke-linecap="round" stroke-linejoin="round"/></svg>
<svg class="abs" style="left:596px;top:101.2px" width="6.4" height="5" viewBox="0 0 6.4 5"><path d="M0.7 1 L3.2 3.6 L5.7 1" fill="none" stroke="#3f444c" stroke-width="1" stroke-linecap="round" stroke-linejoin="round"/></svg>
<div class="abs" style="left:426.8px;top:92px;width:16.5px;height:7.6px;border-radius:2px;background:#f6bd22"></div>
<div class="abs t" style="left:430.0px;top:92.40px;font-size:5.2px;line-height:7px;color:#5e4700;transform-origin:0 50%;transform: scaleX(0.9817);">New</div>
<div class="abs" style="left:658.6px;top:92px;width:16.5px;height:7.6px;border-radius:2px;background:#f6bd22"></div>
<div class="abs t" style="left:661.8000000000001px;top:92.40px;font-size:5.2px;line-height:7px;color:#5e4700;transform-origin:0 50%;transform: scaleX(0.9817);">New</div>
<div class="abs" style="left:718.6px;top:92px;width:16.5px;height:7.6px;border-radius:2px;background:#f6bd22"></div>
<div class="abs t" style="left:721.8000000000001px;top:92.40px;font-size:5.2px;line-height:7px;color:#5e4700;transform-origin:0 50%;transform: scaleX(0.9817);">New</div>
<div id="card" class="abs"></div>
<div class="abs" style="left:306.4px;top:135.6px;width:58.4px;height:22.6px;border:1px solid #eaecef;border-radius:4px;background:#fff;box-shadow:0 1px 1px rgba(16,24,40,.04)"></div>
<div class="abs t" style="left:316.1px;top:140.70px;font-size:9.3px;line-height:12px;color:#a6abb4;transform-origin:0 50%;transform: scaleX(0.9672);">Actions</div>
<svg class="abs" style="left:349.4px;top:143.8px" width="8" height="6" viewBox="0 0 8 6"><path d="M0.8 1.2 L4 4.4 L7.2 1.2" fill="none" stroke="#a0a5ae" stroke-width="1" stroke-linecap="round" stroke-linejoin="round"/></svg>
<div class="abs t" style="left:375px;top:141.00px;font-size:9px;line-height:12px;color:#1f2630;font-weight:bold;transform-origin:0 50%;transform: scaleX(0.9308);">Filter Views:</div>
<div class="abs" style="left:429px;top:135px;width:47.4px;height:24.6px;border-radius:6px;background:#eef3fd"></div>
<div class="abs t" style="left:437.9px;top:140.70px;font-size:9.3px;line-height:12px;color:#2e62d6;transform-origin:0 50%;transform: scaleX(0.9088);-webkit-text-stroke:.2px #2e62d6;">All</div>
<svg class="abs" style="left:458.2px;top:143.8px" width="8" height="6" viewBox="0 0 8 6"><path d="M0.9 1.2 L4 4.4 L7.1 1.2" fill="none" stroke="#2e62d6" stroke-width="1.25" stroke-linecap="round" stroke-linejoin="round"/></svg>
<div class="abs" style="left:845px;top:135px;width:179.6px;height:23.4px;border:1px solid #e6e8ec;border-radius:4px;background:#fff;box-shadow:0 1px 1px rgba(16,24,40,.04)"></div>
<svg class="abs" style="left:852.6px;top:141.6px" width="10" height="10" viewBox="0 0 10 10"><circle cx="4.6" cy="4.6" r="3.5" fill="none" stroke="#555b65" stroke-width="1"/><path d="M7.2 7.2 L9 9" stroke="#555b65" stroke-width="1" stroke-linecap="round"/></svg>
<div class="abs t" style="left:865.6px;top:140.60px;font-size:9.6px;line-height:12px;color:#7d838d;transform-origin:0 50%;transform: scaleX(0.9923);">Search by caption (min 3 chars)</div>
<div id="thead" class="abs"></div>
<div class="abs cb" style="left:306.4px;top:175.8px"></div>
<div class="abs t" style="left:334.8px;top:175.70px;font-size:7.6px;line-height:11px;color:#5e6571;transform-origin:0 50%;transform: scaleX(1.0234);">Caption</div>
<div class="abs t" style="left:618.6px;top:175.70px;font-size:7.6px;line-height:11px;color:#5e6571;transform-origin:0 50%;transform: scaleX(1.0054);">Media</div>
<div class="abs t" style="left:681.6px;top:175.70px;font-size:7.6px;line-height:11px;color:#5e6571;transform-origin:0 50%;transform: scaleX(1.0032);">Status</div>
<div class="abs t" style="left:772px;top:175.70px;font-size:7.6px;line-height:11px;color:#5e6571;transform-origin:0 50%;transform: scaleX(0.9958);">Type</div>
<div class="abs t" style="left:861.6px;top:175.70px;font-size:7.6px;line-height:11px;color:#5e6571;transform-origin:0 50%;transform: scaleX(0.9846);">Date</div>
<div class="abs t" style="left:951.6px;top:175.70px;font-size:7.6px;line-height:11px;color:#5e6571;transform-origin:0 50%;transform: scaleX(1.0054);">Social</div>
<svg width="0" height="0" style="position:absolute"><defs>
<filter id="b1" x="-10%" y="-10%" width="120%" height="120%"><feGaussianBlur stdDeviation=".8"/></filter>
<filter id="b2" x="-10%" y="-10%" width="120%" height="120%"><feGaussianBlur stdDeviation=".5"/></filter>
<clipPath id="tc"><rect width="24" height="24" rx="5"/></clipPath>
<g id="th1" clip-path="url(#tc)"><rect width="24" height="24" fill="#f4f6f9"/><g filter="url(#b1)"><rect x="1" y="1.2" width="22" height="2.6" fill="#6d686b"/><ellipse cx="12" cy="7.4" rx="5.6" ry="5.2" fill="#1e191b"/><path d="M1.6 13 L5.6 5 L8 6 L6 14Z" fill="#a57460"/><path d="M22.4 13 L18.4 5 L16 6 L18 14Z" fill="#a57460"/><ellipse cx="12" cy="8.6" rx="2.3" ry="2.9" fill="#8c5b49"/><path d="M2.6 13.6 L8 11 L16 11 L21.4 13.6 L21 21 L3 21Z" fill="#c7d4ea"/><path d="M10.2 11 L12 16 L13.8 11Z" fill="#96695a"/><rect x="0" y="20" width="24" height="4" fill="#eef2f8"/></g></g>
<g id="th2" clip-path="url(#tc)"><rect width="24" height="24" fill="#2a281d"/><g filter="url(#b1)"><rect x="14" y="0" width="10" height="6" fill="#3f4a2c"/><ellipse cx="11.6" cy="5.6" rx="5.6" ry="5" fill="#17110f"/><rect x="3" y="5.6" width="18" height="1" fill="#8f8c80"/><rect x="4" y="7.8" width="16" height="1" fill="#7d7a6e"/><ellipse cx="11.6" cy="11.6" rx="3.2" ry="4" fill="#5a3a2a"/><path d="M0 20 L1 12 L7 11 L8 20Z" fill="#b4b0a8"/><path d="M16 20 L17 10 L23 10 L24 20Z" fill="#bdb9b0"/><path d="M7 20 L8.6 14 L15 14 L16.4 20Z" fill="#4a3226"/><rect x="0" y="19.4" width="24" height="2.2" fill="#f5f5f5"/><rect x="0" y="21.8" width="24" height="2.2" fill="#33261c"/></g></g>
<g id="th3" clip-path="url(#tc)"><rect width="24" height="24" fill="#6f8256"/><g filter="url(#b2)"><rect x="0" y="0" width="24" height="3.4" fill="#2c3620"/><rect x="4" y="1.4" width="16" height="1" fill="#9aa58a"/><rect x="0" y="4" width="7.4" height="13" fill="#d6d2c2"/><rect x="17.6" y="4" width="6.4" height="12" fill="#9fb083"/><ellipse cx="12.6" cy="9.4" rx="4.2" ry="4.8" fill="#9c4f36"/><ellipse cx="12.6" cy="6" rx="3.8" ry="1.8" fill="#4a2a20"/><path d="M3 20 L5.4 14.4 L19.6 14.4 L22 20Z" fill="#46505e"/><path d="M16.6 9 L19.4 9.6 L19 17 L16.4 16.4Z" fill="#b67658"/><rect x="0" y="18.4" width="24" height="2" fill="#efecf6"/><rect x="0" y="20.6" width="24" height="3.4" fill="#262a32"/></g></g>
<g id="th4" clip-path="url(#tc)"><rect width="24" height="24" fill="#0d0a0d"/><g filter="url(#b2)"><rect x="4" y="3.4" width="16" height="1.4" fill="#b9b4b8"/><rect x="6" y="6" width="12" height="1.2" fill="#9b8f96"/><rect x="8" y="8" width="8" height="1.4" fill="#c23b52"/><ellipse cx="10" cy="15" rx="4.4" ry="4.6" fill="#7c1f34"/><ellipse cx="17" cy="13.5" rx="3" ry="3.4" fill="#b8505e"/><rect x="0" y="19.2" width="24" height="1.6" fill="#e6dcea"/><rect x="0" y="21" width="24" height="3" fill="#181418"/></g></g>
<g id="th5" clip-path="url(#tc)"><rect width="24" height="24" fill="#f0b42a"/><g filter="url(#b1)"><rect x="0" y="0" width="11" height="20" fill="#e8a823"/><rect x="11" y="0" width="13" height="20" fill="#e86a7c"/><ellipse cx="6.4" cy="5.4" rx="2.8" ry="2.8" fill="#3a2420"/><ellipse cx="17.6" cy="5.4" rx="2.8" ry="2.8" fill="#3a2824"/><path d="M1 20 L2 9 L11 9 L12 20Z" fill="#d81f5a"/><path d="M13 20 L14 9 L22 9 L23 20Z" fill="#7fc455"/><rect x="10.2" y="2" width="2" height="18" fill="#f5a81c"/><rect x="0" y="18.6" width="24" height="5.4" fill="#f4f1ea"/><rect x="5" y="19.6" width="17" height="1.8" fill="#e6c524"/></g></g>
<g id="th6" clip-path="url(#tc)"><rect width="24" height="24" fill="#e8edf5"/><g filter="url(#b2)"><rect x="0" y="0" width="24" height="10" fill="#3b3c48"/><rect x="0" y="0" width="24" height="3" fill="#8a8b9a"/><rect x="2" y="3.6" width="20" height="1.2" fill="#d9d9e0"/><rect x="3" y="6" width="18" height="1.2" fill="#b9bac4"/><ellipse cx="7" cy="13" rx="4.6" ry="4.4" fill="#1d2230"/><ellipse cx="17.4" cy="13" rx="4" ry="4.4" fill="#c7b0a6"/><path d="M0 24 L1 16 L12 16 L13 24Z" fill="#2f5fae"/><path d="M12 24 L13 16 L24 16 L24 24Z" fill="#aebfd8"/><rect x="0" y="20" width="24" height="1.6" fill="#f6f8fb"/><rect x="10" y="21.6" width="12" height="2.4" fill="#2b56a6"/></g></g>
<g id="th7" clip-path="url(#tc)"><rect width="24" height="24" fill="#1c1b1d"/><g filter="url(#b2)"><rect x="3" y="3.4" width="16" height="1.2" fill="#c9c8cb"/><rect x="4" y="6" width="15" height="1.1" fill="#8f8e92"/><rect x="4" y="8.4" width="12" height="1" fill="#66656a"/><rect x="19" y="9" width="5" height="7" fill="#6f6e73"/><path d="M0 19 L0 14 C4 12 9 13 12 15 L24 14 L24 19Z" fill="#7c7b80"/><ellipse cx="6" cy="15.6" rx="5" ry="1.8" fill="#26252a"/><rect x="0" y="18.8" width="24" height="1.8" fill="#ebe6f2"/><rect x="11" y="18" width="10" height="2.2" fill="#b9b2cc"/><rect x="0" y="20.8" width="24" height="3.2" fill="#19181b"/></g></g>
<g id="th9" clip-path="url(#tc)"><rect width="24" height="24" fill="#1b1c14"/><g filter="url(#b2)"><rect x="8" y="0" width="8" height="2.4" fill="#4a5a2c"/><rect x="3" y="3.4" width="18" height="1.1" fill="#b5b4a8"/><rect x="4" y="5.8" width="16" height="1.1" fill="#9c9b90"/><rect x="8" y="8.2" width="8" height="1.1" fill="#8a897e"/><ellipse cx="6.6" cy="14" rx="2.6" ry="4" fill="#6e6048"/><ellipse cx="12" cy="14.6" rx="2.4" ry="3.6" fill="#2c2a22"/><ellipse cx="17.4" cy="14" rx="3" ry="4.4" fill="#c9c6ba"/><rect x="21" y="11" width="3" height="8" fill="#8c8b80"/><rect x="0" y="19" width="24" height="1.7" fill="#efeef4"/><rect x="14" y="18.4" width="9" height="2" fill="#a79fd0"/><rect x="0" y="20.9" width="24" height="3.1" fill="#15150f"/></g></g>
<g id="fbb"><circle cx="4.3" cy="4.3" r="4.3" fill="#fff"/><circle cx="4.3" cy="4.3" r="3.7" fill="#1877f2"/><path d="M4.75 8 V5.3 H5.7 L5.85 4.2 H4.75 V3.55 C4.75 3.2 4.9 3 5.3 3 H5.9 V2.05 C5.7 2 5.35 1.98 5.05 1.98 C4.15 1.98 3.6 2.5 3.6 3.4 V4.2 H2.7 V5.3 H3.6 V8Z" fill="#fff"/></g>
<linearGradient id="igg" x1="0" y1="1" x2="1" y2="0"><stop offset="0" stop-color="#fdc155"/><stop offset=".3" stop-color="#f4622f"/><stop offset=".6" stop-color="#d92d7a"/><stop offset="1" stop-color="#7e3cc9"/></linearGradient>
<g id="igb"><rect width="8.6" height="8.6" rx="2.2" fill="#fff"/><rect x=".5" y=".5" width="7.6" height="7.6" rx="1.9" fill="url(#igg)"/><rect x="1.9" y="1.9" width="4.8" height="4.8" rx="1.4" fill="none" stroke="#fff" stroke-width=".7"/><circle cx="4.3" cy="4.3" r="1.15" fill="none" stroke="#fff" stroke-width=".7"/><circle cx="5.75" cy="2.85" r=".35" fill="#fff"/></g>
</defs></svg>
<div class="abs cb" style="left:306.4px;top:211.8px;"></div>
<div class="abs t" style="left:332.5px;top:204.90px;font-size:8.6px;line-height:12px;color:#2b323d;transform-origin:0 50%;transform: scaleX(1.0385);">It could be ear wax buildup—or something more.</div>
<div class="abs t" style="left:332.5px;top:216.60px;font-size:8.6px;line-height:12px;color:#2b323d;transform-origin:0 50%;transform: scaleX(1.1434);">...</div>
<svg class="abs" style="left:616px;top:204.5px" width="24" height="24" viewBox="0 0 24 24"><use href="#th1"/></svg>
<div class="abs" style="left:678.9px;top:209.7px;width:55.4px;height:13.2px;border-radius:6.6px;background:#e9f2fe"></div>
<svg class="abs" style="left:683.1px;top:212.9px" width="6.6" height="7" viewBox="0 0 6.6 7"><g fill="none" stroke="#4c8fe6" stroke-width=".85"><rect x=".6" y="1.2" width="5.4" height="5.2" rx="1.2"/><path d="M.6 3 H6 M2 .3 V1.8 M4.6 .3 V1.8"/></g></svg>
<div class="abs t" style="left:694.2px;top:211.00px;font-size:7.7px;line-height:11px;color:#5390e6;transform-origin:0 50%;transform: scaleX(1.0071);-webkit-text-stroke:.25px #5390e6;">Scheduled</div>
<div class="abs" style="left:769.6px;top:209.9px;width:58.8px;height:12.6px;border-radius:6.3px;background:#f1f3f5"></div>
<div class="abs t" style="left:773.6px;top:211.00px;font-size:7.7px;line-height:11px;color:#3b414b;transform-origin:0 50%;transform: scaleX(0.9991);-webkit-text-stroke:.28px #3b414b;">Recurring Post</div>
<div class="abs t" style="left:864px;top:205.00px;font-size:8.75px;line-height:12px;color:#59616e;transform-origin:0 50%;transform: scaleX(1.0591);">Jun 05, 2025</div>
<div class="abs t" style="left:864px;top:217.00px;font-size:8.75px;line-height:12px;color:#a7adb6;transform-origin:0 50%;transform: scaleX(1.0599);">09:02 AM</div>
<div class="abs av" style="left:948.0px;top:205.9px;width:18.4px;height:18.4px"></div>
<div class="abs t" style="left:952.6px;top:211.5px;font-size:3.8px;line-height:5px;font-weight:bold;font-style:italic;color:#6d7094;letter-spacing:-.1px;opacity:.85">JUST</div><div class="abs" style="left:953.6px;top:216.3px;width:7px;height:.8px;background:#8f92a8;opacity:.6"></div>
<svg class="abs" style="left:959.9px;top:217.6px" width="9.2" height="9.2" viewBox="0 0 8.6 8.6"><use href="#fbb"/></svg>
<div class="abs av" style="left:971.1px;top:205.9px;width:18.4px;height:18.4px"></div>
<div class="abs t" style="left:975.7px;top:211.5px;font-size:3.8px;line-height:5px;font-weight:bold;font-style:italic;color:#6d7094;letter-spacing:-.1px;opacity:.85">JUST</div><div class="abs" style="left:976.7px;top:216.3px;width:7px;height:.8px;background:#8f92a8;opacity:.6"></div>
<svg class="abs" style="left:982.6px;top:217.6px" width="9.2" height="9.2" viewBox="0 0 8.6 8.6"><use href="#igb"/></svg>
<svg class="abs" style="left:1015.6px;top:211.9px" width="3" height="10" viewBox="0 0 3 10"><circle cx="1.5" cy="1.3" r=".95" fill="#2e333b"/><circle cx="1.5" cy="5" r=".95" fill="#2e333b"/><circle cx="1.5" cy="8.7" r=".95" fill="#2e333b"/></svg>
<div class="abs rowline" style="top:235.2px"></div>
<div class="abs cb" style="left:306.4px;top:250.9px;"></div>
<div class="abs t" style="left:332.5px;top:244.05px;font-size:8.6px;line-height:12px;color:#2b323d;transform-origin:0 50%;transform: scaleX(1.0288);">You’re not alone—and there is a solution.</div>
<div class="abs t" style="left:332.5px;top:255.75px;font-size:8.6px;line-height:12px;color:#2b323d;transform-origin:0 50%;transform: scaleX(1.1434);">...</div>
<svg class="abs" style="left:616px;top:243.7px" width="24" height="24" viewBox="0 0 24 24"><use href="#th2"/></svg>
<div class="abs" style="left:678.9px;top:248.8px;width:55.4px;height:13.2px;border-radius:6.6px;background:#e9f2fe"></div>
<svg class="abs" style="left:683.1px;top:252.1px" width="6.6" height="7" viewBox="0 0 6.6 7"><g fill="none" stroke="#4c8fe6" stroke-width=".85"><rect x=".6" y="1.2" width="5.4" height="5.2" rx="1.2"/><path d="M.6 3 H6 M2 .3 V1.8 M4.6 .3 V1.8"/></g></svg>
<div class="abs t" style="left:694.2px;top:250.15px;font-size:7.7px;line-height:11px;color:#5390e6;transform-origin:0 50%;transform: scaleX(1.0071);-webkit-text-stroke:.25px #5390e6;">Scheduled</div>
<div class="abs" style="left:769.6px;top:249.1px;width:58.8px;height:12.6px;border-radius:6.3px;background:#f1f3f5"></div>
<div class="abs t" style="left:773.6px;top:250.15px;font-size:7.7px;line-height:11px;color:#3b414b;transform-origin:0 50%;transform: scaleX(0.9991);-webkit-text-stroke:.28px #3b414b;">Recurring Post</div>
<div class="abs t" style="left:864px;top:244.15px;font-size:8.75px;line-height:12px;color:#59616e;transform-origin:0 50%;transform: scaleX(1.0560);">May 29, 2025</div>
<div class="abs t" style="left:864px;top:256.15px;font-size:8.75px;line-height:12px;color:#a7adb6;transform-origin:0 50%;transform: scaleX(1.0626);">09:40 AM</div>
<div class="abs av" style="left:948.0px;top:245.1px;width:18.4px;height:18.4px"></div>
<div class="abs t" style="left:952.6px;top:250.7px;font-size:3.8px;line-height:5px;font-weight:bold;font-style:italic;color:#6d7094;letter-spacing:-.1px;opacity:.85">JUST</div><div class="abs" style="left:953.6px;top:255.4px;width:7px;height:.8px;background:#8f92a8;opacity:.6"></div>
<svg class="abs" style="left:959.9px;top:256.8px" width="9.2" height="9.2" viewBox="0 0 8.6 8.6"><use href="#fbb"/></svg>
<div class="abs av" style="left:971.1px;top:245.1px;width:18.4px;height:18.4px"></div>
<div class="abs t" style="left:975.7px;top:250.7px;font-size:3.8px;line-height:5px;font-weight:bold;font-style:italic;color:#6d7094;letter-spacing:-.1px;opacity:.85">JUST</div><div class="abs" style="left:976.7px;top:255.4px;width:7px;height:.8px;background:#8f92a8;opacity:.6"></div>
<svg class="abs" style="left:982.6px;top:256.8px" width="9.2" height="9.2" viewBox="0 0 8.6 8.6"><use href="#igb"/></svg>
<svg class="abs" style="left:1015.6px;top:251.1px" width="3" height="10" viewBox="0 0 3 10"><circle cx="1.5" cy="1.3" r=".95" fill="#2e333b"/><circle cx="1.5" cy="5" r=".95" fill="#2e333b"/><circle cx="1.5" cy="8.7" r=".95" fill="#2e333b"/></svg>
<div class="abs rowline" style="top:274.4px"></div>
<div class="abs cb" style="left:306.4px;top:290.1px;"></div>
<div class="abs t" style="left:332.5px;top:283.20px;font-size:8.6px;line-height:12px;color:#2b323d;transform-origin:0 50%;transform: scaleX(1.0348);">Untreated hearing loss is linked to memory issues.</div>
<div class="abs t" style="left:332.5px;top:294.90px;font-size:8.6px;line-height:12px;color:#2b323d;transform-origin:0 50%;transform: scaleX(1.0349);">Let’s catch it early and take action....</div>
<svg class="abs" style="left:616px;top:282.8px" width="24" height="24" viewBox="0 0 24 24"><use href="#th3"/></svg>
<div class="abs" style="left:678.9px;top:288.0px;width:55.4px;height:13.2px;border-radius:6.6px;background:#e9f2fe"></div>
<svg class="abs" style="left:683.1px;top:291.2px" width="6.6" height="7" viewBox="0 0 6.6 7"><g fill="none" stroke="#4c8fe6" stroke-width=".85"><rect x=".6" y="1.2" width="5.4" height="5.2" rx="1.2"/><path d="M.6 3 H6 M2 .3 V1.8 M4.6 .3 V1.8"/></g></svg>
<div class="abs t" style="left:694.2px;top:289.30px;font-size:7.7px;line-height:11px;color:#5390e6;transform-origin:0 50%;transform: scaleX(1.0071);-webkit-text-stroke:.25px #5390e6;">Scheduled</div>
<div class="abs" style="left:769.6px;top:288.2px;width:58.8px;height:12.6px;border-radius:6.3px;background:#f1f3f5"></div>
<div class="abs t" style="left:773.6px;top:289.30px;font-size:7.7px;line-height:11px;color:#3b414b;transform-origin:0 50%;transform: scaleX(0.9991);-webkit-text-stroke:.28px #3b414b;">Recurring Post</div>
<div class="abs t" style="left:864px;top:283.30px;font-size:8.75px;line-height:12px;color:#59616e;transform-origin:0 50%;transform: scaleX(1.0560);">May 22, 2025</div>
<div class="abs t" style="left:864px;top:295.30px;font-size:8.75px;line-height:12px;color:#a7adb6;transform-origin:0 50%;transform: scaleX(1.0625);">11:57 AM</div>
<div class="abs av" style="left:948.0px;top:284.2px;width:18.4px;height:18.4px"></div>
<div class="abs t" style="left:952.6px;top:289.8px;font-size:3.8px;line-height:5px;font-weight:bold;font-style:italic;color:#6d7094;letter-spacing:-.1px;opacity:.85">JUST</div><div class="abs" style="left:953.6px;top:294.6px;width:7px;height:.8px;background:#8f92a8;opacity:.6"></div>
<svg class="abs" style="left:959.9px;top:295.9px" width="9.2" height="9.2" viewBox="0 0 8.6 8.6"><use href="#fbb"/></svg>
<div class="abs av" style="left:971.1px;top:284.2px;width:18.4px;height:18.4px"></div>
<div class="abs t" style="left:975.7px;top:289.8px;font-size:3.8px;line-height:5px;font-weight:bold;font-style:italic;color:#6d7094;letter-spacing:-.1px;opacity:.85">JUST</div><div class="abs" style="left:976.7px;top:294.6px;width:7px;height:.8px;background:#8f92a8;opacity:.6"></div>
<svg class="abs" style="left:982.6px;top:295.9px" width="9.2" height="9.2" viewBox="0 0 8.6 8.6"><use href="#igb"/></svg>
<svg class="abs" style="left:1015.6px;top:290.2px" width="3" height="10" viewBox="0 0 3 10"><circle cx="1.5" cy="1.3" r=".95" fill="#2e333b"/><circle cx="1.5" cy="5" r=".95" fill="#2e333b"/><circle cx="1.5" cy="8.7" r=".95" fill="#2e333b"/></svg>
<div class="abs rowline" style="top:313.6px"></div>
<div class="abs cb" style="left:306.4px;top:329.2px;"></div>
<div class="abs t" style="left:332.5px;top:322.35px;font-size:8.6px;line-height:12px;color:#2b323d;transform-origin:0 50%;transform: scaleX(1.0424);">Muffled sounds, buzzing, or asking people to repeat?</div>
<div class="abs t" style="left:332.5px;top:334.05px;font-size:8.6px;line-height:12px;color:#2b323d;transform-origin:0 50%;transform: scaleX(1.0393);">Time for a screening....</div>
<svg class="abs" style="left:616px;top:321.9px" width="24" height="24" viewBox="0 0 24 24"><use href="#th4"/></svg>
<div class="abs" style="left:678.9px;top:327.2px;width:55.4px;height:13.2px;border-radius:6.6px;background:#e9f2fe"></div>
<svg class="abs" style="left:683.1px;top:330.4px" width="6.6" height="7" viewBox="0 0 6.6 7"><g fill="none" stroke="#4c8fe6" stroke-width=".85"><rect x=".6" y="1.2" width="5.4" height="5.2" rx="1.2"/><path d="M.6 3 H6 M2 .3 V1.8 M4.6 .3 V1.8"/></g></svg>
<div class="abs t" style="left:694.2px;top:328.45px;font-size:7.7px;line-height:11px;color:#5390e6;transform-origin:0 50%;transform: scaleX(1.0071);-webkit-text-stroke:.25px #5390e6;">Scheduled</div>
<div class="abs" style="left:769.6px;top:327.4px;width:58.8px;height:12.6px;border-radius:6.3px;background:#f1f3f5"></div>
<div class="abs t" style="left:773.6px;top:328.45px;font-size:7.7px;line-height:11px;color:#3b414b;transform-origin:0 50%;transform: scaleX(0.9991);-webkit-text-stroke:.28px #3b414b;">Recurring Post</div>
<div class="abs t" style="left:864px;top:322.45px;font-size:8.75px;line-height:12px;color:#59616e;transform-origin:0 50%;transform: scaleX(1.0560);">May 15, 2025</div>
<div class="abs t" style="left:864px;top:334.45px;font-size:8.75px;line-height:12px;color:#a7adb6;transform-origin:0 50%;transform: scaleX(1.0625);">11:55 AM</div>
<div class="abs av" style="left:948.0px;top:323.4px;width:18.4px;height:18.4px"></div>
<div class="abs t" style="left:952.6px;top:328.9px;font-size:3.8px;line-height:5px;font-weight:bold;font-style:italic;color:#6d7094;letter-spacing:-.1px;opacity:.85">JUST</div><div class="abs" style="left:953.6px;top:333.8px;width:7px;height:.8px;background:#8f92a8;opacity:.6"></div>
<svg class="abs" style="left:959.9px;top:335.1px" width="9.2" height="9.2" viewBox="0 0 8.6 8.6"><use href="#fbb"/></svg>
<div class="abs av" style="left:971.1px;top:323.4px;width:18.4px;height:18.4px"></div>
<div class="abs t" style="left:975.7px;top:328.9px;font-size:3.8px;line-height:5px;font-weight:bold;font-style:italic;color:#6d7094;letter-spacing:-.1px;opacity:.85">JUST</div><div class="abs" style="left:976.7px;top:333.8px;width:7px;height:.8px;background:#8f92a8;opacity:.6"></div>
<svg class="abs" style="left:982.6px;top:335.1px" width="9.2" height="9.2" viewBox="0 0 8.6 8.6"><use href="#igb"/></svg>
<svg class="abs" style="left:1015.6px;top:329.4px" width="3" height="10" viewBox="0 0 3 10"><circle cx="1.5" cy="1.3" r=".95" fill="#2e333b"/><circle cx="1.5" cy="5" r=".95" fill="#2e333b"/><circle cx="1.5" cy="8.7" r=".95" fill="#2e333b"/></svg>
<div class="abs rowline" style="top:352.7px"></div>
<div class="abs cb" style="left:306.4px;top:368.4px;"></div>
<svg class="abs" style="left:332.7px;top:362.3px" width="10.6" height="10" viewBox="0 0 10.6 10"><path d="M1.6 6.6 V5 A3.7 3.7 0 0 1 9 5 V6.6" fill="none" stroke="#3a3d42" stroke-width="1.3"/><rect x=".6" y="5.6" width="2.6" height="4" rx="1" fill="#4b4f55"/><rect x="7.4" y="5.6" width="2.6" height="4" rx="1" fill="#4b4f55"/></svg>
<div class="abs t" style="left:346.7px;top:361.50px;font-size:8.6px;line-height:12px;color:#2b323d;transform-origin:0 50%;transform: scaleX(1.0117);">Would You Rather...</div>
<div class="abs t" style="left:332.5px;top:373.20px;font-size:8.6px;line-height:12px;color:#2b323d;transform-origin:0 50%;transform: scaleX(1.1434);">...</div>
<svg class="abs" style="left:616px;top:361.1px" width="24" height="24" viewBox="0 0 24 24"><use href="#th5"/></svg>
<div class="abs" style="left:678.9px;top:366.3px;width:55.4px;height:13.2px;border-radius:6.6px;background:#e9f2fe"></div>
<svg class="abs" style="left:683.1px;top:369.5px" width="6.6" height="7" viewBox="0 0 6.6 7"><g fill="none" stroke="#4c8fe6" stroke-width=".85"><rect x=".6" y="1.2" width="5.4" height="5.2" rx="1.2"/><path d="M.6 3 H6 M2 .3 V1.8 M4.6 .3 V1.8"/></g></svg>
<div class="abs t" style="left:694.2px;top:367.60px;font-size:7.7px;line-height:11px;color:#5390e6;transform-origin:0 50%;transform: scaleX(1.0071);-webkit-text-stroke:.25px #5390e6;">Scheduled</div>
<div class="abs" style="left:769.6px;top:366.5px;width:58.8px;height:12.6px;border-radius:6.3px;background:#f1f3f5"></div>
<div class="abs t" style="left:773.6px;top:367.60px;font-size:7.7px;line-height:11px;color:#3b414b;transform-origin:0 50%;transform: scaleX(0.9991);-webkit-text-stroke:.28px #3b414b;">Recurring Post</div>
<div class="abs t" style="left:864px;top:361.60px;font-size:8.75px;line-height:12px;color:#59616e;transform-origin:0 50%;transform: scaleX(1.0578);">May 11, 2025</div>
<div class="abs t" style="left:864px;top:373.60px;font-size:8.75px;line-height:12px;color:#a7adb6;transform-origin:0 50%;transform: scaleX(1.0599);">12:55 AM</div>
<div class="abs av" style="left:948.0px;top:362.5px;width:18.4px;height:18.4px"></div>
<div class="abs t" style="left:952.6px;top:368.1px;font-size:3.8px;line-height:5px;font-weight:bold;font-style:italic;color:#6d7094;letter-spacing:-.1px;opacity:.85">JUST</div><div class="abs" style="left:953.6px;top:372.9px;width:7px;height:.8px;background:#8f92a8;opacity:.6"></div>
<svg class="abs" style="left:959.9px;top:374.2px" width="9.2" height="9.2" viewBox="0 0 8.6 8.6"><use href="#fbb"/></svg>
<div class="abs av" style="left:971.1px;top:362.5px;width:18.4px;height:18.4px"></div>
<div class="abs t" style="left:975.7px;top:368.1px;font-size:3.8px;line-height:5px;font-weight:bold;font-style:italic;color:#6d7094;letter-spacing:-.1px;opacity:.85">JUST</div><div class="abs" style="left:976.7px;top:372.9px;width:7px;height:.8px;background:#8f92a8;opacity:.6"></div>
<svg class="abs" style="left:982.6px;top:374.2px" width="9.2" height="9.2" viewBox="0 0 8.6 8.6"><use href="#igb"/></svg>
<svg class="abs" style="left:1015.6px;top:368.5px" width="3" height="10" viewBox="0 0 3 10"><circle cx="1.5" cy="1.3" r=".95" fill="#2e333b"/><circle cx="1.5" cy="5" r=".95" fill="#2e333b"/><circle cx="1.5" cy="8.7" r=".95" fill="#2e333b"/></svg>
<div class="abs rowline" style="top:391.9px"></div>
<div class="abs cb" style="left:306.4px;top:407.6px;"></div>
<div class="abs t" style="left:332.5px;top:400.65px;font-size:8.6px;line-height:12px;color:#2b323d;transform-origin:0 50%;transform: scaleX(1.0393);">Don’t wait until it’s serious—screening is smart health!</div>
<svg class="abs" style="left:332.7px;top:413.2px" width="10.6" height="10" viewBox="0 0 10.6 10"><ellipse cx="5.2" cy="4.6" rx="4.7" ry="3.6" fill="#e88a9a"/><path d="M2 3.6 C3 2.6 4 4 5 3 C6 2 7 3.6 8.4 3 M2.4 5.8 C3.6 5 4.6 6.4 5.8 5.6 C6.8 5 7.6 6 8.4 5.4" fill="none" stroke="#c65a6e" stroke-width=".6"/><path d="M6.6 7.6 L7.6 9.2 L8.4 7.4Z" fill="#d9788a"/></svg>
<div class="abs t" style="left:346.7px;top:412.35px;font-size:8.6px;line-height:12px;color:#2b323d;transform-origin:0 50%;transform: scaleX(1.0353);">Your ears are connected to your brain health too!...</div>
<svg class="abs" style="left:616px;top:400.2px" width="24" height="24" viewBox="0 0 24 24"><use href="#th6"/></svg>
<div class="abs" style="left:678.9px;top:405.5px;width:55.4px;height:13.2px;border-radius:6.6px;background:#e9f2fe"></div>
<svg class="abs" style="left:683.1px;top:408.7px" width="6.6" height="7" viewBox="0 0 6.6 7"><g fill="none" stroke="#4c8fe6" stroke-width=".85"><rect x=".6" y="1.2" width="5.4" height="5.2" rx="1.2"/><path d="M.6 3 H6 M2 .3 V1.8 M4.6 .3 V1.8"/></g></svg>
<div class="abs t" style="left:694.2px;top:406.75px;font-size:7.7px;line-height:11px;color:#5390e6;transform-origin:0 50%;transform: scaleX(1.0071);-webkit-text-stroke:.25px #5390e6;">Scheduled</div>
<div class="abs" style="left:769.6px;top:405.7px;width:58.8px;height:12.6px;border-radius:6.3px;background:#f1f3f5"></div>
<div class="abs t" style="left:773.6px;top:406.75px;font-size:7.7px;line-height:11px;color:#3b414b;transform-origin:0 50%;transform: scaleX(0.9991);-webkit-text-stroke:.28px #3b414b;">Recurring Post</div>
<div class="abs t" style="left:864px;top:400.75px;font-size:8.75px;line-height:12px;color:#59616e;transform-origin:0 50%;transform: scaleX(1.0635);">May 08, 2025</div>
<div class="abs t" style="left:864px;top:412.75px;font-size:8.75px;line-height:12px;color:#a7adb6;transform-origin:0 50%;transform: scaleX(1.0626);">09:40 AM</div>
<div class="abs av" style="left:948.0px;top:401.7px;width:18.4px;height:18.4px"></div>
<div class="abs t" style="left:952.6px;top:407.2px;font-size:3.8px;line-height:5px;font-weight:bold;font-style:italic;color:#6d7094;letter-spacing:-.1px;opacity:.85">JUST</div><div class="abs" style="left:953.6px;top:412.1px;width:7px;height:.8px;background:#8f92a8;opacity:.6"></div>
<svg class="abs" style="left:959.9px;top:413.4px" width="9.2" height="9.2" viewBox="0 0 8.6 8.6"><use href="#fbb"/></svg>
<div class="abs av" style="left:971.1px;top:401.7px;width:18.4px;height:18.4px"></div>
<div class="abs t" style="left:975.7px;top:407.2px;font-size:3.8px;line-height:5px;font-weight:bold;font-style:italic;color:#6d7094;letter-spacing:-.1px;opacity:.85">JUST</div><div class="abs" style="left:976.7px;top:412.1px;width:7px;height:.8px;background:#8f92a8;opacity:.6"></div>
<svg class="abs" style="left:982.6px;top:413.4px" width="9.2" height="9.2" viewBox="0 0 8.6 8.6"><use href="#igb"/></svg>
<svg class="abs" style="left:1015.6px;top:407.7px" width="3" height="10" viewBox="0 0 3 10"><circle cx="1.5" cy="1.3" r=".95" fill="#2e333b"/><circle cx="1.5" cy="5" r=".95" fill="#2e333b"/><circle cx="1.5" cy="8.7" r=".95" fill="#2e333b"/></svg>
<div class="abs rowline" style="top:431.0px"></div>
<div class="abs cb" style="left:306.4px;top:446.7px;background:#f7f7f8;border-color:#e6e8eb;"></div>
<div class="abs t" style="left:332.5px;top:439.80px;font-size:8.6px;line-height:12px;color:#2b323d;transform-origin:0 50%;transform: scaleX(1.0385);">If you’re constantly raising the volume, your hearing may need a</div>
<div class="abs t" style="left:332.5px;top:451.50px;font-size:8.6px;line-height:12px;color:#2b323d;transform-origin:0 50%;transform: scaleX(1.1068);">check-in....</div>
<svg class="abs" style="left:616px;top:439.4px" width="24" height="24" viewBox="0 0 24 24"><use href="#th7"/></svg>
<div class="abs" style="left:678.9px;top:444.6px;width:53px;height:13.2px;border-radius:6.6px;background:#f2fcf6"></div>
<svg class="abs" style="left:683.1px;top:448.0px" width="6.6" height="7" viewBox="0 0 6.6 7"><path d="M1 .8 L5.8 3.5 L1 6.2Z M2.6 2.4 V4.6" fill="none" stroke="#4cc583" stroke-width=".8" stroke-linejoin="round"/></svg>
<div class="abs t" style="left:694.2px;top:445.90px;font-size:7.7px;line-height:11px;color:#48c480;transform-origin:0 50%;transform: scaleX(0.9951);-webkit-text-stroke:.25px #48c480;">Published</div>
<div class="abs" style="left:769.6px;top:444.8px;width:58.8px;height:12.6px;border-radius:6.3px;background:#f1f3f5"></div>
<div class="abs t" style="left:773.6px;top:445.90px;font-size:7.7px;line-height:11px;color:#3b414b;transform-origin:0 50%;transform: scaleX(0.9991);-webkit-text-stroke:.28px #3b414b;">Recurring Post</div>
<div class="abs t" style="left:864px;top:439.90px;font-size:8.75px;line-height:12px;color:#59616e;transform-origin:0 50%;transform: scaleX(1.0484);">May 01, 2025</div>
<div class="abs t" style="left:864px;top:451.90px;font-size:8.75px;line-height:12px;color:#a7adb6;transform-origin:0 50%;transform: scaleX(1.0626);">09:40 AM</div>
<div class="abs av" style="left:948.0px;top:440.8px;width:18.4px;height:18.4px"></div>
<div class="abs t" style="left:952.6px;top:446.4px;font-size:3.8px;line-height:5px;font-weight:bold;font-style:italic;color:#6d7094;letter-spacing:-.1px;opacity:.85">JUST</div><div class="abs" style="left:953.6px;top:451.2px;width:7px;height:.8px;background:#8f92a8;opacity:.6"></div>
<svg class="abs" style="left:959.9px;top:452.5px" width="9.2" height="9.2" viewBox="0 0 8.6 8.6"><use href="#fbb"/></svg>
<svg class="abs" style="left:1015.6px;top:446.8px" width="3" height="10" viewBox="0 0 3 10"><circle cx="1.5" cy="1.3" r=".95" fill="#2e333b"/><circle cx="1.5" cy="5" r=".95" fill="#2e333b"/><circle cx="1.5" cy="8.7" r=".95" fill="#2e333b"/></svg>
<div class="abs rowline" style="top:470.2px"></div>
<div class="abs cb" style="left:306.4px;top:485.9px;background:#f7f7f8;border-color:#e6e8eb;"></div>
<div class="abs t" style="left:332.5px;top:478.95px;font-size:8.6px;line-height:12px;color:#2b323d;transform-origin:0 50%;transform: scaleX(1.0385);">If you’re constantly raising the volume, your hearing may need a</div>
<div class="abs t" style="left:332.5px;top:490.65px;font-size:8.6px;line-height:12px;color:#2b323d;transform-origin:0 50%;transform: scaleX(1.1068);">check-in....</div>
<svg class="abs" style="left:616px;top:478.6px" width="24" height="24" viewBox="0 0 24 24"><use href="#th7"/></svg>
<div class="abs" style="left:678.9px;top:483.8px;width:53px;height:13.2px;border-radius:6.6px;background:#f2fcf6"></div>
<svg class="abs" style="left:683.1px;top:487.2px" width="6.6" height="7" viewBox="0 0 6.6 7"><path d="M1 .8 L5.8 3.5 L1 6.2Z M2.6 2.4 V4.6" fill="none" stroke="#4cc583" stroke-width=".8" stroke-linejoin="round"/></svg>
<div class="abs t" style="left:694.2px;top:485.05px;font-size:7.7px;line-height:11px;color:#48c480;transform-origin:0 50%;transform: scaleX(0.9951);-webkit-text-stroke:.25px #48c480;">Published</div>
<div class="abs" style="left:769.6px;top:484.0px;width:58.8px;height:12.6px;border-radius:6.3px;background:#f1f3f5"></div>
<div class="abs t" style="left:773.6px;top:485.05px;font-size:7.7px;line-height:11px;color:#3b414b;transform-origin:0 50%;transform: scaleX(0.9991);-webkit-text-stroke:.28px #3b414b;">Recurring Post</div>
<div class="abs t" style="left:864px;top:479.05px;font-size:8.75px;line-height:12px;color:#59616e;transform-origin:0 50%;transform: scaleX(1.0484);">May 01, 2025</div>
<div class="abs t" style="left:864px;top:491.05px;font-size:8.75px;line-height:12px;color:#a7adb6;transform-origin:0 50%;transform: scaleX(1.0626);">09:40 AM</div>
<div class="abs av" style="left:948.0px;top:480.0px;width:18.4px;height:18.4px"></div>
<div class="abs t" style="left:952.6px;top:485.6px;font-size:3.8px;line-height:5px;font-weight:bold;font-style:italic;color:#6d7094;letter-spacing:-.1px;opacity:.85">JUST</div><div class="abs" style="left:953.6px;top:490.4px;width:7px;height:.8px;background:#8f92a8;opacity:.6"></div>
<svg class="abs" style="left:959.8px;top:491.7px" width="9.2" height="9.2" viewBox="0 0 8.6 8.6"><use href="#igb"/></svg>
<svg class="abs" style="left:1015.6px;top:486.0px" width="3" height="10" viewBox="0 0 3 10"><circle cx="1.5" cy="1.3" r=".95" fill="#2e333b"/><circle cx="1.5" cy="5" r=".95" fill="#2e333b"/><circle cx="1.5" cy="8.7" r=".95" fill="#2e333b"/></svg>
<div class="abs rowline" style="top:509.3px"></div>
<div class="abs cb" style="left:306.4px;top:525.0px;background:#f7f7f8;border-color:#e6e8eb;"></div>
<div class="abs t" style="left:332.5px;top:518.10px;font-size:8.6px;line-height:12px;color:#2b323d;transform-origin:0 50%;transform: scaleX(1.0389);">It’s not just background noise—it might be hearing loss.</div>
<div class="abs t" style="left:332.5px;top:529.80px;font-size:8.6px;line-height:12px;color:#2b323d;transform-origin:0 50%;transform: scaleX(1.0447);">Catch it early....</div>
<svg class="abs" style="left:616px;top:517.7px" width="24" height="24" viewBox="0 0 24 24"><use href="#th9"/></svg>
<div class="abs" style="left:678.9px;top:522.9px;width:53px;height:13.2px;border-radius:6.6px;background:#f2fcf6"></div>
<svg class="abs" style="left:683.1px;top:526.3px" width="6.6" height="7" viewBox="0 0 6.6 7"><path d="M1 .8 L5.8 3.5 L1 6.2Z M2.6 2.4 V4.6" fill="none" stroke="#4cc583" stroke-width=".8" stroke-linejoin="round"/></svg>
<div class="abs t" style="left:694.2px;top:524.20px;font-size:7.7px;line-height:11px;color:#48c480;transform-origin:0 50%;transform: scaleX(0.9951);-webkit-text-stroke:.25px #48c480;">Published</div>
<div class="abs" style="left:769.6px;top:523.1px;width:58.8px;height:12.6px;border-radius:6.3px;background:#f1f3f5"></div>
<div class="abs t" style="left:773.6px;top:524.20px;font-size:7.7px;line-height:11px;color:#3b414b;transform-origin:0 50%;transform: scaleX(0.9991);-webkit-text-stroke:.28px #3b414b;">Recurring Post</div>
<div class="abs t" style="left:864px;top:518.20px;font-size:8.75px;line-height:12px;color:#59616e;transform-origin:0 50%;transform: scaleX(1.0577);">Apr 24, 2025</div>
<div class="abs t" style="left:864px;top:530.20px;font-size:8.75px;line-height:12px;color:#a7adb6;transform-origin:0 50%;transform: scaleX(1.0599);">09:40 AM</div>
<div class="abs av" style="left:948.0px;top:519.1px;width:18.4px;height:18.4px"></div>
<div class="abs t" style="left:952.6px;top:524.7px;font-size:3.8px;line-height:5px;font-weight:bold;font-style:italic;color:#6d7094;letter-spacing:-.1px;opacity:.85">JUST</div><div class="abs" style="left:953.6px;top:529.5px;width:7px;height:.8px;background:#8f92a8;opacity:.6"></div>
<svg class="abs" style="left:959.8px;top:530.8px" width="9.2" height="9.2" viewBox="0 0 8.6 8.6"><use href="#igb"/></svg>
<svg class="abs" style="left:1015.6px;top:525.1px" width="3" height="10" viewBox="0 0 3 10"><circle cx="1.5" cy="1.3" r=".95" fill="#2e333b"/><circle cx="1.5" cy="5" r=".95" fill="#2e333b"/><circle cx="1.5" cy="8.7" r=".95" fill="#2e333b"/></svg>
<div class="abs rowline" style="top:548.4px"></div>
<div class="abs cb" style="left:306.4px;top:564.1px;background:#f7f7f8;border-color:#e6e8eb;"></div>
<div class="abs t" style="left:332.5px;top:557.25px;font-size:8.6px;line-height:12px;color:#2b323d;transform-origin:0 50%;transform: scaleX(1.0389);">It’s not just background noise—it might be hearing loss.</div>
<div class="abs t" style="left:332.5px;top:568.95px;font-size:8.6px;line-height:12px;color:#2b323d;transform-origin:0 50%;transform: scaleX(1.0447);">Catch it early....</div>
<svg class="abs" style="left:616px;top:556.8px" width="24" height="24" viewBox="0 0 24 24"><use href="#th9"/></svg>
<div class="abs" style="left:678.9px;top:562.0px;width:53px;height:13.2px;border-radius:6.6px;background:#f2fcf6"></div>
<svg class="abs" style="left:683.1px;top:565.4px" width="6.6" height="7" viewBox="0 0 6.6 7"><path d="M1 .8 L5.8 3.5 L1 6.2Z M2.6 2.4 V4.6" fill="none" stroke="#4cc583" stroke-width=".8" stroke-linejoin="round"/></svg>
<div class="abs t" style="left:694.2px;top:563.35px;font-size:7.7px;line-height:11px;color:#48c480;transform-origin:0 50%;transform: scaleX(0.9951);-webkit-text-stroke:.25px #48c480;">Published</div>
<div class="abs" style="left:769.6px;top:562.2px;width:58.8px;height:12.6px;border-radius:6.3px;background:#f1f3f5"></div>
<div class="abs t" style="left:773.6px;top:563.35px;font-size:7.7px;line-height:11px;color:#3b414b;transform-origin:0 50%;transform: scaleX(0.9991);-webkit-text-stroke:.28px #3b414b;">Recurring Post</div>
<div class="abs t" style="left:864px;top:557.35px;font-size:8.75px;line-height:12px;color:#59616e;transform-origin:0 50%;transform: scaleX(1.0577);">Apr 24, 2025</div>
<div class="abs t" style="left:864px;top:569.35px;font-size:8.75px;line-height:12px;color:#a7adb6;transform-origin:0 50%;transform: scaleX(1.0599);">09:40 AM</div>
<div class="abs av" style="left:948.0px;top:558.2px;width:18.4px;height:18.4px"></div>
<div class="abs t" style="left:952.6px;top:563.8px;font-size:3.8px;line-height:5px;font-weight:bold;font-style:italic;color:#6d7094;letter-spacing:-.1px;opacity:.85">JUST</div><div class="abs" style="left:953.6px;top:568.6px;width:7px;height:.8px;background:#8f92a8;opacity:.6"></div>
<svg class="abs" style="left:959.9px;top:569.9px" width="9.2" height="9.2" viewBox="0 0 8.6 8.6"><use href="#fbb"/></svg>
<svg class="abs" style="left:1015.6px;top:564.2px" width="3" height="10" viewBox="0 0 3 10"><circle cx="1.5" cy="1.3" r=".95" fill="#2e333b"/><circle cx="1.5" cy="5" r=".95" fill="#2e333b"/><circle cx="1.5" cy="8.7" r=".95" fill="#2e333b"/></svg>
<div class="abs rowline" style="top:587.6px"></div>
<div class="abs t" style="left:310.7px;top:599.20px;font-size:9px;line-height:12px;color:#a2a8b1;transform-origin:0 50%;transform: scaleX(0.9830);">1 to 10 of 48 result(s)</div>
<div class="abs" style="left:811.4px;top:595.4px;width:50px;height:21px;border:1px solid #eef0f2;border-radius:4px;background:#fff"></div>
<div class="abs t" style="left:819px;top:599.40px;font-size:8.8px;line-height:12px;color:#a9aeb7;transform-origin:0 50%;transform: scaleX(1.0107);">Previous</div>
<div class="abs" style="left:870px;top:597.4px;width:16.6px;height:16.6px;border:1px solid #4a7ee0;border-radius:2px;background:#fff"></div>
<div class="abs t" style="left:876.4px;top:599.50px;font-size:9px;line-height:12px;color:#3a6cd4;">1</div>
<div class="abs t" style="left:897.0px;top:599.50px;font-size:9.2px;line-height:12px;color:#3a414c;">2</div>
<div class="abs t" style="left:918.8px;top:599.50px;font-size:9.2px;line-height:12px;color:#3a414c;">3</div>
<div class="abs t" style="left:940.1999999999999px;top:599.50px;font-size:9.2px;line-height:12px;color:#3a414c;">4</div>
<div class="abs t" style="left:961.8px;top:599.50px;font-size:9.2px;line-height:12px;color:#3a414c;">5</div>
<div class="abs" style="left:981.4px;top:595.4px;width:35.2px;height:21px;border:1px solid #e4e7eb;border-radius:4px;background:#fff;box-shadow:0 1px 1px rgba(16,24,40,.04)"></div>
<div class="abs t" style="left:989.6px;top:599.40px;font-size:8.8px;line-height:12px;color:#2c333e;transform-origin:0 50%;transform: scaleX(1.0169);-webkit-text-stroke:.25px #2c333e;">Next</div>
<div class="abs" style="left:1071.2px;top:68.7px;width:19.2px;height:19.2px;border-radius:50%;background:#1f9c61"></div>
<svg class="abs" style="left:1075.6px;top:73.2px" width="10.4" height="10.4" viewBox="0 0 10.4 10.4"><path d="M2.2 1 L3.6 0.9 L4.4 3 L3.3 3.9 C3.9 5.2 5 6.4 6.4 7 L7.4 5.9 L9.5 6.8 L9.4 8.2 C9.3 9 8.6 9.5 7.8 9.4 C4.2 8.9 1.4 6 1 2.6 C0.9 1.8 1.4 1.1 2.2 1Z" fill="none" stroke="#eafff3" stroke-width=".9" stroke-linejoin="round"/></svg>
<div class="abs" style="left:1096.1px;top:68.7px;width:19.2px;height:19.2px;border-radius:50%;background:#4a9a7e"></div>
<svg class="abs" style="left:1099.6px;top:72.6px" width="12" height="11.4" viewBox="0 0 12 11.4"><path d="M1 4 H3.6 L8.6 1.2 V9 L3.6 6.6 H1Z" fill="#fff"/><path d="M2.2 6.6 H4.2 L4.8 10.2 H3Z" fill="#fff"/><path d="M9.6 1.6 V8.8" stroke="#fff" stroke-width="1.1"/></svg>
<div class="abs" style="left:1108.9px;top:68.6px;width:6.6px;height:6.6px;border-radius:50%;background:#f20d1a;box-shadow:0 0 0 .6px rgba(255,220,220,.75)"></div>
<div class="abs" style="left:1121.6px;top:68.7px;width:19.2px;height:19.2px;border-radius:50%;background:#f46f15"></div>
<svg class="abs" style="left:1125.4px;top:71.8px" width="11.6" height="12.6" viewBox="0 0 11.6 12.6"><path d="M5.8 0.6 C8 0.6 9.2 2.4 9.2 4.6 C9.2 7.2 10.2 8.2 10.9 9 V9.8 H0.7 V9 C1.4 8.2 2.4 7.2 2.4 4.6 C2.4 2.4 3.6 0.6 5.8 0.6Z" fill="#fff"/><path d="M4.4 10.6 A1.4 1.4 0 0 0 7.2 10.6Z" fill="#fff"/></svg>
<div class="abs" style="left:1134.6px;top:70.6px;width:3.8px;height:3.8px;border-radius:50%;background:#f6b41c"></div>
<div class="abs" style="left:1146.7px;top:68.7px;width:19.2px;height:19.2px;border-radius:50%;background:#2389f0"></div>
<div class="abs t" style="left:1153.3px;top:72.00px;font-size:11px;line-height:13px;color:#ffffff;font-weight:bold;">?</div>
<div class="abs" style="left:1171.8px;top:68.7px;width:19.2px;height:19.2px;border-radius:50%;background:#7c9bbf"></div>
<div class="abs t" style="left:1175.6px;top:73.10px;font-size:8.6px;line-height:11px;color:#f4f8fc;font-weight:bold;transform-origin:0 50%;transform: scaleX(1.0289);">LK</div>
<div class="abs" style="left:1194px;top:95px;width:6px;height:550px;background:linear-gradient(90deg,#fefefe,#f4f4f4)"></div>
<div class="abs" style="left:1196px;top:178.4px;width:4px;height:467px;background:#828282;border-radius:2px 2px 0 0"></div>
<svg class="abs" style="left:1184.2px;top:589.6px" width="8" height="8" viewBox="0 0 8 8"><path d="M1.2 1.2 L6.8 6.8 M6.8 1.2 L1.2 6.8" stroke="#5c5c5c" stroke-width=".9"/></svg>
<svg class="abs" style="left:1159.4px;top:601.4px" width="28.8" height="28.8" viewBox="0 0 28.8 28.8"><circle cx="14.4" cy="14.4" r="14" fill="#2e8f6a"/><circle cx="14.4" cy="14.4" r="13.1" fill="#e9eef8"/><circle cx="14.4" cy="14.4" r="12.2" fill="#0b3aa6"/><g fill="none" stroke="#dfe8ff" stroke-width=".9"><rect x="6.6" y="7.4" width="15.6" height="12.6" rx=".8"/><path d="M6.6 10 H22.2 M9 12.8 H12 M17 12.8 H20"/><path d="M14.4 11.6 C16 13.2 16.4 15.6 16 18 H12.8 C12.4 15.6 12.8 13.2 14.4 11.6Z M12.8 16.6 L11.2 19 M16 16.6 L17.6 19 M14.4 18.6 V21.6" stroke-linejoin="round"/></g><circle cx="14.4" cy="15.2" r=".9" fill="#dfe8ff"/></svg>
<div class="abs" style="left:127.1px;top:620.9px;width:12.2px;height:12.2px;border-radius:50%;background:#34c390"></div>
<svg class="abs" style="left:130.4px;top:624px" width="5" height="6" viewBox="0 0 5 6"><path d="M3.6 0.8 L1.4 3 L3.6 5.2" fill="none" stroke="#1f8c63" stroke-width="1" stroke-linecap="round" stroke-linejoin="round"/></svg>
<div id="taskbar" class="abs"></div>
<svg class="abs" style="left:11.8px;top:653.8px" width="12.4" height="12.4" viewBox="0 0 12.4 12.4"><g fill="#fafafa"><path d="M0 1.8 L5.4 1 V5.9 H0Z"/><path d="M6 .9 L12.4 0 V5.9 H6Z"/><path d="M0 6.5 H5.4 V11.4 L0 10.6Z"/><path d="M6 6.5 H12.4 V12.4 L6 11.5Z"/></g></svg>
<div class="abs" style="left:36.8px;top:645px;width:214.6px;height:30px;background:#343434;border-top:1px solid #474747"></div>
<svg class="abs" style="left:44.6px;top:653.6px" width="13.4" height="13.4" viewBox="0 0 13.4 13.4"><circle cx="8.2" cy="5.2" r="3.9" fill="none" stroke="#e4e4e4" stroke-width="1.1"/><path d="M5.4 8 L1 12.4" stroke="#e4e4e4" stroke-width="1.2" stroke-linecap="round"/></svg>
<div class="abs t" style="left:66.3px;top:653.30px;font-size:10.8px;line-height:14px;color:#d4d4d4;transform-origin:0 50%;transform: scaleX(1.0028);">Type here to search</div>
<svg class="abs" style="left:263.6px;top:654px" width="13" height="12" viewBox="0 0 13 12"><g fill="none" stroke="#f0f0f0" stroke-width="1"><rect x="2.4" y="3" width="6.6" height="6"/><path d="M.5 1 H9 M.5 11 H9 M11.4 3.6 V11.4"/></g><rect x="10.8" y=".6" width="1.4" height="1.6" fill="#f0f0f0"/></svg>
<div class="abs" style="left:437px;top:645px;width:36.4px;height:30px;background:#9a5a26"></div>
<div class="abs" style="left:437px;top:673.2px;width:36.4px;height:1.8px;background:#f28a2a"></div>
<div class="abs" style="left:547px;top:645px;width:36.6px;height:30px;background:#9a5a26"></div>
<div class="abs" style="left:547px;top:673.2px;width:36.6px;height:1.8px;background:#f28a2a"></div>
<div class="abs" style="left:584.2px;top:645px;width:36.4px;height:30px;background:#4b4b4b"></div>
<div class="abs" style="left:584.2px;top:673.2px;width:36.4px;height:1.8px;background:#e6cdb4"></div>
<div class="abs" style="left:621.2px;top:645px;width:36.2px;height:30px;background:#9a5a26"></div>
<div class="abs" style="left:621.2px;top:673.2px;width:36.2px;height:1.8px;background:#f28a2a"></div>
<div class="abs" style="left:292.5px;top:673.2px;width:30.0px;height:1.8px;background:#e8dccb"></div>
<div class="abs" style="left:366.8px;top:673.2px;width:30.0px;height:1.8px;background:#e8dccb"></div>
<div class="abs" style="left:661px;top:673.2px;width:29.0px;height:1.8px;background:#e8dccb"></div>
<div class="abs" style="left:697px;top:673.2px;width:30.5px;height:1.8px;background:#e8dccb"></div>
<div class="abs" style="left:734px;top:673.2px;width:30.0px;height:1.8px;background:#e8dccb"></div>
<div class="abs" style="left:771px;top:673.2px;width:30.0px;height:1.8px;background:#e8dccb"></div>
<div class="abs" style="left:807.5px;top:673.2px;width:30.0px;height:1.8px;background:#e8dccb"></div>
<div class="abs" style="left:843.6px;top:673.2px;width:30.9px;height:1.8px;background:#e8dccb"></div>
<div class="abs" style="left:881px;top:673.2px;width:30.4px;height:1.8px;background:#e8dccb"></div>
<svg class="abs" style="left:299.3px;top:651.0px" width="18" height="18" viewBox="0 0 18 18"><defs><linearGradient id="eg1" x1="0" y1="0" x2="1" y2="1"><stop offset="0" stop-color="#35c1b1"/><stop offset="1" stop-color="#1b6fd0"/></linearGradient></defs><path d="M9 .8 C13.8 .8 17.4 4.2 17.4 8.6 C17.4 11.2 15.6 12.8 13.4 12.8 C11.8 12.8 10.8 12 10.8 11 C10.8 10.2 11.6 9.8 11.6 8.6 C11.6 7 10.2 5.8 8.4 5.8 C5.6 5.8 3.4 8 3.4 11 C3.4 14.4 6 17 9.8 17.2 C5 17.6 .8 13.8 .8 9 C.8 4.4 4.4 .8 9 .8Z" fill="url(#eg1)"/><path d="M9 .8 C13.8 .8 17.4 4.2 17.4 8.6 C17.4 9 17.36 9.4 17.3 9.8 C16.6 6.4 13.4 4.4 9.8 4.4 C5.6 4.4 2 7 .9 10.4 C.2 5.4 4 .8 9 .8Z" fill="#2a9fe0"/><rect x="2" y="11.4" width="7.6" height="5.6" rx=".8" fill="#9a6a2a"/><rect x="4.4" y="10.2" width="2.8" height="1.6" fill="none" stroke="#9a6a2a" stroke-width=".8"/><rect x="2" y="13.6" width="7.6" height=".8" fill="#e0b04a"/></svg>
<svg class="abs" style="left:336.0px;top:651.0px" width="17" height="18" viewBox="0 0 17 18"><path d="M5 5 V3.4 A3.5 3.2 0 0 1 12 3.4 V5" fill="none" stroke="#2aa5e8" stroke-width="1.3"/><rect x="1" y="4.6" width="15" height="12.6" rx="2" fill="#f4f4f4"/><rect x="5" y="7.6" width="3.2" height="3.2" fill="#f0542c"/><rect x="8.8" y="7.6" width="3.2" height="3.2" fill="#7fba1c"/><rect x="5" y="11.4" width="3.2" height="3.2" fill="#1ea4ef"/><rect x="8.8" y="11.4" width="3.2" height="3.2" fill="#fbb810"/></svg>
<svg class="abs" style="left:372.3px;top:652.5px" width="18" height="15" viewBox="0 0 18 15"><path d="M.6 1.6 H6.4 L8 3.2 H17.4 V14.4 H.6Z" fill="#e9b63c"/><rect x=".6" y="4.2" width="16.8" height="10.2" rx=".6" fill="#f8d568"/><rect x="3.4" y="8.6" width="11.2" height="5.8" fill="#3f96dc"/><rect x="5.6" y="11" width="6.8" height="3.4" fill="#f8d568"/></svg>
<svg class="abs" style="left:408.5px;top:651.5px" width="19" height="17" viewBox="0 0 19 17"><path d="M7 1 H18 V12 L12.5 16 H7Z" fill="#1a73c9"/><path d="M7 8 L12.5 12 L18 8 V15.4 H7Z" fill="#35a4ee"/><rect x="10" y="2" width="8" height="5" fill="#4fb4f4"/><rect x=".8" y="4" width="9.6" height="9.6" rx="1" fill="#0f5fb4"/><circle cx="5.6" cy="8.8" r="2.5" fill="none" stroke="#fff" stroke-width="1.3"/></svg>
<svg class="abs" style="left:446.5px;top:651.5px" width="17" height="17" viewBox="0 0 17 17"><rect width="17" height="17" fill="#0a47a8"/><path d="M8.6 3.6 A5 5 0 1 0 8.6 13.4 A6.4 6.4 0 0 1 8.6 3.6Z" fill="#fff"/><circle cx="11.6" cy="5" r="1.1" fill="#fff"/><circle cx="12.2" cy="8.5" r="1.1" fill="#fff"/><circle cx="11.6" cy="12" r="1.1" fill="#fff"/></svg>
<svg class="abs" style="left:483.0px;top:651.0px" width="18" height="18" viewBox="0 0 18 18"><circle cx="9" cy="9" r="8.6" fill="#fff"/><path d="M9 9 L1.55 4.7 A8.6 8.6 0 0 1 16.45 4.7Z" fill="#e8402f"/><path d="M9 9 L16.45 4.7 A8.6 8.6 0 0 1 9 17.6Z" fill="#f8c41c"/><path d="M9 9 L9 17.6 A8.6 8.6 0 0 1 1.55 4.7Z" fill="#2fa553"/><circle cx="9" cy="9" r="4" fill="#fff"/><circle cx="9" cy="9" r="3.2" fill="#3f84f0"/></svg>
<svg class="abs" style="left:519.8px;top:651.0px" width="18" height="18" viewBox="0 0 18 18"><circle cx="9" cy="9" r="8.8" fill="#1877f2"/><path d="M10 18 V11.6 H12.2 L12.6 9 H10 V7.4 C10 6.6 10.4 6.1 11.4 6.1 H12.7 V3.9 C12.2 3.8 11.4 3.7 10.6 3.7 C8.5 3.7 7.2 5 7.2 7.1 V9 H4.9 V11.6 H7.2 V18Z" fill="#fff"/></svg>
<svg class="abs" style="left:557.0px;top:652.0px" width="16" height="16" viewBox="0 0 16 16"><rect width="16" height="16" fill="#f9d71c"/><path d="M16 9 V16 H9Z" fill="#3a3a3a"/></svg>
<svg class="abs" style="left:593.0px;top:650.5px" width="18" height="18" viewBox="0 0 18 18"><circle cx="9" cy="9" r="8.6" fill="#fff"/><path d="M9 9 L1.55 4.7 A8.6 8.6 0 0 1 16.45 4.7Z" fill="#e8402f"/><path d="M9 9 L16.45 4.7 A8.6 8.6 0 0 1 9 17.6Z" fill="#f8c41c"/><path d="M9 9 L9 17.6 A8.6 8.6 0 0 1 1.55 4.7Z" fill="#2fa553"/><circle cx="9" cy="9" r="4" fill="#fff"/><circle cx="9" cy="9" r="3.2" fill="#3f84f0"/><circle cx="12.4" cy="13" r="4.6" fill="#c96a2a"/><circle cx="12.4" cy="11.8" r="1.9" fill="#6e3a1e"/><path d="M8.8 16.4 C9.4 13.4 15.4 13.4 16 16.4Z" fill="#4a2a18"/></svg>
<svg class="abs" style="left:629.5px;top:649.5px" width="19" height="19" viewBox="0 0 19 19"><defs><linearGradient id="m3" x1="0" y1="0" x2="1" y2="1"><stop offset="0" stop-color="#2ec6f2"/><stop offset=".5" stop-color="#5b6af0"/><stop offset="1" stop-color="#e24bd0"/></linearGradient></defs><path d="M3 4 C3 2 5 1 7 1.6 L13 3.6 C15 4.2 16.6 6 16.6 8 V11 H8 V7 L3 9Z" fill="url(#m3)"/><path d="M2.4 8 L8 6.4 V11.6 H2.4Z" fill="#f2c22a"/><rect x="9" y="6" width="8" height="6" rx="1.4" fill="#d946c9"/><rect x="3.4" y="12.4" width="12.4" height="4.6" rx=".6" fill="#1f1f24"/><text x="9.6" y="16.3" font-family="Liberation Sans,sans-serif" font-size="3.9" font-weight="bold" fill="#fff" text-anchor="middle">M365</text></svg>
<svg class="abs" style="left:667.0px;top:651.0px" width="18" height="18" viewBox="0 0 18 18"><circle cx="9" cy="9" r="8.6" fill="#fff"/><path d="M9 9 L1.55 4.7 A8.6 8.6 0 0 1 16.45 4.7Z" fill="#e8402f"/><path d="M9 9 L16.45 4.7 A8.6 8.6 0 0 1 9 17.6Z" fill="#f8c41c"/><path d="M9 9 L9 17.6 A8.6 8.6 0 0 1 1.55 4.7Z" fill="#2fa553"/><circle cx="9" cy="9" r="4" fill="#fff"/><circle cx="9" cy="9" r="3.2" fill="#3f84f0"/><rect x="8.6" y="9.6" width="8" height="8" rx="1.2" fill="#cfd6e2"/><circle cx="12.6" cy="12.4" r="1.7" fill="#5a6a86"/><path d="M9.6 17.4 C10 14.6 15.2 14.6 15.6 17.4Z" fill="#2f4f8a"/></svg>
<svg class="abs" style="left:703.5px;top:650.5px" width="22" height="19" viewBox="0 0 22 19"><path d="M9 1 A8 8 0 1 1 5 15.9 L1 17 L2.1 13 A8 8 0 0 1 9 1Z" fill="#23b75c"/><path d="M9 2.6 A6.4 6.4 0 1 1 5.4 14.2 L3.2 14.8 L3.8 12.6 A6.4 6.4 0 0 1 9 2.6Z" fill="#1e1e1e" opacity=".0"/><path d="M6.4 5 L7.6 4.8 L8.4 6.8 L7.6 7.6 C8.2 8.8 9.2 9.8 10.4 10.4 L11.2 9.6 L13.2 10.4 L13 11.6 C12.4 12.6 11 12.8 9.6 12.2 C7.6 11.4 6 9.6 5.4 7.6 C5.2 6.6 5.6 5.4 6.4 5Z" fill="#fff"/><circle cx="16" cy="13.4" r="5" fill="#2a2a2a" stroke="#d8d8d8" stroke-width=".8"/><text x="16" y="15.6" font-family="Liberation Sans,sans-serif" font-size="6.2" fill="#fff" text-anchor="middle">16</text></svg>
<svg class="abs" style="left:740.8px;top:650.0px" width="16" height="18" viewBox="0 0 16 18"><rect x=".6" y="1" width="14.8" height="5" fill="#b32a3a"/><rect x=".6" y="6" width="14.8" height="5" fill="#3f8a3a"/><rect x=".6" y="11" width="14.8" height="5.6" fill="#4a5fc0"/><rect x=".6" y="5.4" width="14.8" height=".9" fill="#e0c050"/><rect x=".6" y="10.6" width="14.8" height=".9" fill="#e0c050"/><rect x="6" y="0" width="4" height="17" fill="#d8b24a"/><rect x="5" y="7" width="6" height="5" rx=".6" fill="#f0e0a0"/><rect x="6.6" y="8.4" width="2.8" height="2" fill="#6a4a1a"/></svg>
<svg class="abs" style="left:778.0px;top:651.0px" width="16" height="18" viewBox="0 0 16 18"><path d="M4.4 1.4 L14.6 .8 L12.6 15 L1.6 16.6Z" fill="#bfe6f4"/><path d="M5.4 2.4 L14 1.8 L12 14 L3 15.6Z" fill="#8fcfe6"/><path d="M4.4 1.4 L14.6 .8 L14.2 3 L4 3.8Z" fill="#e8f8fd"/><path d="M1.6 16.6 L12.6 15 L13 16.4 L2.4 17.6Z" fill="#5a9ab6"/></svg>
<svg class="abs" style="left:814.5px;top:652.0px" width="16" height="16" viewBox="0 0 16 16"><defs><linearGradient id="ph" x1="0" y1="0" x2="0" y2="1"><stop offset="0" stop-color="#2a7de8"/><stop offset="1" stop-color="#3fb0f2"/></linearGradient></defs><rect width="16" height="16" rx="1.6" fill="url(#ph)"/><path d="M0 13.6 L6.2 6.4 L10 11 L12 9 L16 13.6 V16 H0Z" fill="#9fdcfb"/><path d="M0 13.6 L6.2 6.4 L11.6 16 H0Z" fill="#d6f0ff"/><circle cx="12" cy="3.8" r="1.5" fill="#eaf6ff"/></svg>
<svg class="abs" style="left:850.5px;top:651.5px" width="18" height="17" viewBox="0 0 18 17"><rect x="2.6" y="1" width="13.6" height="10.4" rx=".8" fill="#dfe4ea" transform="rotate(-6 9 6)"/><rect x="3.8" y="2.2" width="11" height="7.6" fill="#7fb4dc" transform="rotate(-6 9 6)"/><path d="M4.6 8 L7 5 L9 7.4 L11 4.4 L13.6 7" fill="none" stroke="#2a5a9a" stroke-width=".8"/><ellipse cx="4" cy="12.6" rx="3.4" ry="1.6" fill="#c8ccd2"/><path d="M7 12 H12 L13 15.4 H6Z" fill="#b9bec6"/></svg>
<svg class="abs" style="left:887.5px;top:653.5px" width="17" height="12" viewBox="0 0 17 12"><rect x=".4" y=".4" width="16.2" height="11.2" fill="#f2f4f6"/><rect x="3.4" y="1.6" width="8.2" height="8.8" fill="#1f7be0"/><rect x="1" y="1.6" width="1.6" height="1.4" fill="#7a8088"/><rect x="1" y="4" width="1.6" height="1.4" fill="#7a8088"/><rect x="1" y="6.4" width="1.6" height="1.4" fill="#7a8088"/><rect x="12.6" y="1.6" width="3" height="8.8" fill="#dfe3e8"/><path d="M13 3 H15.2 M13 5 H15.2 M13 7 H15.2" stroke="#8a9098" stroke-width=".6"/></svg>
<svg class="abs" style="left:991.1px;top:651.0px" width="17" height="17" viewBox="0 0 17 17"><ellipse cx="9" cy="3.4" rx="6" ry="2.6" fill="#f5a623"/><ellipse cx="7.4" cy="7.4" rx="6.4" ry="2.6" fill="#f08c1c"/><ellipse cx="9.4" cy="11" rx="5.4" ry="2.2" fill="#f5a623"/><path d="M6.6 13.6 L9.4 16.4 L12.2 13.6Z" fill="#e0521c"/></svg>
<div class="abs t" style="left:1015.5px;top:653.20px;font-size:10.6px;line-height:14px;color:#ececec;transform-origin:0 50%;transform: scaleX(0.8941);">USD...</div>
<svg class="abs" style="left:1062.6px;top:656.8px" width="9" height="6" viewBox="0 0 9 6"><path d="M.8 5 L4.5 1.2 L8.2 5" fill="none" stroke="#f0f0f0" stroke-width="1.05" stroke-linecap="round" stroke-linejoin="round"/></svg>
<svg class="abs" style="left:1079.2px;top:654.6px" width="12.4" height="11.4" viewBox="0 0 12.4 11.4"><g fill="none" stroke="#f0f0f0" stroke-width=".9"><rect x="3.6" y=".8" width="8" height="5.8"/><path d="M7.6 6.6 V9.6 M4.6 9.8 H10.8"/><rect x=".5" y="3.4" width="2.8" height="4.6" fill="#222120"/></g></svg>
<svg class="abs" style="left:1097.4px;top:654.8px" width="12.4" height="11" viewBox="0 0 12.4 11"><g fill="none" stroke="#f0f0f0" stroke-width=".9" stroke-linejoin="round"><path d="M.6 3.8 H2.6 L5.2 1.2 V9.8 L2.6 7.2 H.6Z"/><path d="M6.8 3.8 C7.6 4.8 7.6 6.2 6.8 7.2 M8.6 2.6 C10 4.2 10 6.8 8.6 8.4 M10.4 1.4 C12.4 3.8 12.4 7.2 10.4 9.6" stroke-linecap="round"/></g></svg>
<div class="abs t" style="left:1118.4px;top:647.40px;font-size:8.9px;line-height:11px;color:#f2f2f2;transform-origin:0 50%;transform: scaleX(0.9474);">10:44 PM</div>
<div class="abs t" style="left:1120.5px;top:661.50px;font-size:8.9px;line-height:11px;color:#f2f2f2;transform-origin:0 50%;transform: scaleX(0.9552);">5/5/2025</div>
<svg class="abs" style="left:1169.4px;top:653px" width="16" height="15" viewBox="0 0 16 15"><path d="M.8 .8 H11.6 V9.4 H6 L3.2 12 V9.4 H.8Z" fill="#f4f4f4"/><path d="M2.6 3 H9.8 M2.6 5 H9.8 M2.6 7 H7" stroke="#222" stroke-width=".7"/><circle cx="11.4" cy="10.4" r="3.7" fill="#222120" stroke="#f0f0f0" stroke-width=".8"/><text x="11.4" y="12.7" font-family="Liberation Sans,sans-serif" font-size="6" fill="#fff" text-anchor="middle">1</text></svg>
<div class="abs" style="left:1195.6px;top:645px;width:1px;height:30px;background:#5a5a5a"></div>
</div>
</body>
</html>
